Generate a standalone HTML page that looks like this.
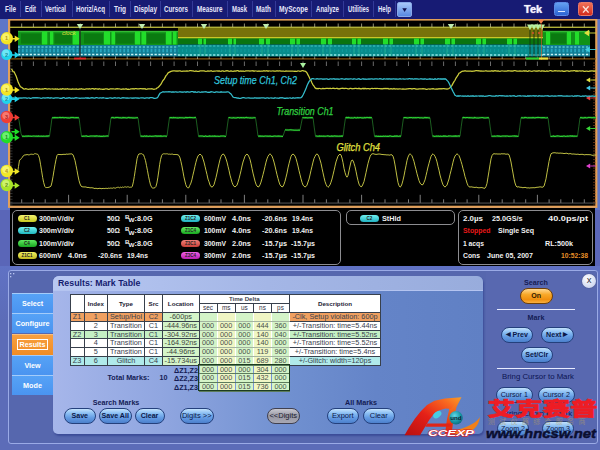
<!DOCTYPE html>
<html><head><meta charset="utf-8"><title>Tek Mark Table</title>
<style>
html,body{margin:0;padding:0}
body{width:600px;height:450px;overflow:hidden;position:relative;background:#5a66b8;font-family:"Liberation Sans",sans-serif;}
.abs{position:absolute}
#menubar{left:0;top:0;width:600px;height:18.5px;background:#171b74;}
#menubar span.m{position:absolute;top:4.5px;font-size:8px;font-weight:bold;color:#dcdcf4;line-height:10px;white-space:nowrap;letter-spacing:-.1px}
#menubar i.s{position:absolute;top:1px;width:1px;height:16px;background:#343a98}
.info{position:absolute;color:#f0f0f0;font-size:7.6px;font-weight:bold;line-height:10px;white-space:nowrap}
.pill{position:absolute;width:19px;height:7px;border-radius:3.5px;font-size:4.5px;line-height:7.5px;text-align:center;color:#222;font-weight:bold}
.box{position:absolute;border:1px solid #8c8c90;border-radius:5px;box-sizing:border-box}
.tab{position:absolute;left:12px;width:41px;height:20px;background:linear-gradient(#56a2f6,#4a94f0);color:#fff;font-weight:bold;font-size:7.2px;line-height:19.5px;text-align:center;border-top:1px solid #a4ccfa;box-sizing:border-box}
.btn{position:absolute;height:16px;border-radius:8px;box-sizing:border-box;border:1px solid #24407c;background:linear-gradient(#c4e2fc 0%,#8cc0f4 30%,#649ce4 62%,#4c80cc 100%);color:#0c1848;font-weight:bold;font-size:7.1px;line-height:14.5px;text-align:center;white-space:nowrap}
.lbl{position:absolute;color:#141c54;font-weight:bold;font-size:7.2px;line-height:10px;white-space:nowrap;text-align:center}
table{border-collapse:collapse;position:absolute;table-layout:fixed}
td{border:1px solid #38404c;padding:0;font-size:7.3px;line-height:7.75px;height:7.75px;text-align:center;color:#3a424e;overflow:hidden;white-space:nowrap}
</style></head>
<body>
<svg class="abs" style="left:0;top:0" width="600" height="210" viewBox="0 0 600 210" font-family="'Liberation Sans',sans-serif">
<rect x="0" y="18" width="600" height="192" fill="#5e76c8"/>
<rect x="9.1" y="19.5" width="587.2" height="187.3" fill="#000" stroke="#e2a058" stroke-width="2.2"/>
<rect x="10" y="26.6" width="586" height="1.4" fill="#b0b038"/>
<path d="M21.7,23.5V27.0M33.4,23.5V27.0M45.2,23.5V27.0M56.9,23.5V27.0M68.6,23.5V27.0M80.3,23.5V27.0M92.0,23.5V27.0M103.8,23.5V27.0M115.5,23.5V27.0M127.2,23.5V27.0M138.9,23.5V27.0M150.6,23.5V27.0M162.4,23.5V27.0M174.1,23.5V27.0M185.8,23.5V27.0M197.5,23.5V27.0M209.2,23.5V27.0M221.0,23.5V27.0M232.7,23.5V27.0M244.4,23.5V27.0M256.1,23.5V27.0M267.8,23.5V27.0M279.6,23.5V27.0M291.3,23.5V27.0M303.0,23.5V27.0M314.7,23.5V27.0M326.4,23.5V27.0M338.2,23.5V27.0M349.9,23.5V27.0M361.6,23.5V27.0M373.3,23.5V27.0M385.0,23.5V27.0M396.8,23.5V27.0M408.5,23.5V27.0M420.2,23.5V27.0M431.9,23.5V27.0M443.6,23.5V27.0M455.4,23.5V27.0M467.1,23.5V27.0M478.8,23.5V27.0M490.5,23.5V27.0M502.2,23.5V27.0M514.0,23.5V27.0M525.7,23.5V27.0M537.4,23.5V27.0M549.1,23.5V27.0M560.8,23.5V27.0M572.6,23.5V27.0M584.3,23.5V27.0" stroke="#c8c8a0" stroke-width="0.9" opacity="0.8" fill="none"/>
<rect x="10" y="58.3" width="586" height="1.2" fill="#8a5a10"/>
<path d="M21.7,55.5V59.0M33.4,55.5V59.0M45.2,55.5V59.0M56.9,55.5V59.0M68.6,55.5V59.0M80.3,55.5V59.0M92.0,55.5V59.0M103.8,55.5V59.0M115.5,55.5V59.0M127.2,55.5V59.0M138.9,55.5V59.0M150.6,55.5V59.0M162.4,55.5V59.0M174.1,55.5V59.0M185.8,55.5V59.0M197.5,55.5V59.0M209.2,55.5V59.0M221.0,55.5V59.0M232.7,55.5V59.0M244.4,55.5V59.0M256.1,55.5V59.0M267.8,55.5V59.0M279.6,55.5V59.0M291.3,55.5V59.0M303.0,55.5V59.0M314.7,55.5V59.0M326.4,55.5V59.0M338.2,55.5V59.0M349.9,55.5V59.0M361.6,55.5V59.0M373.3,55.5V59.0M385.0,55.5V59.0M396.8,55.5V59.0M408.5,55.5V59.0M420.2,55.5V59.0M431.9,55.5V59.0M443.6,55.5V59.0M455.4,55.5V59.0M467.1,55.5V59.0M478.8,55.5V59.0M490.5,55.5V59.0M502.2,55.5V59.0M514.0,55.5V59.0M525.7,55.5V59.0M537.4,55.5V59.0M549.1,55.5V59.0M560.8,55.5V59.0M572.6,55.5V59.0M584.3,55.5V59.0" stroke="#c0c0b0" stroke-width="0.9" opacity="0.75" fill="none"/>
<path d="M21.7,61.5V66.0M33.4,61.5V66.0M45.2,61.5V66.0M56.9,61.5V66.0M68.6,61.5V66.0M80.3,61.5V66.0M92.0,61.5V66.0M103.8,61.5V66.0M115.5,61.5V66.0M127.2,61.5V66.0M138.9,61.5V66.0M150.6,61.5V66.0M162.4,61.5V66.0M174.1,61.5V66.0M185.8,61.5V66.0M197.5,61.5V66.0M209.2,61.5V66.0M221.0,61.5V66.0M232.7,61.5V66.0M244.4,61.5V66.0M256.1,61.5V66.0M267.8,61.5V66.0M279.6,61.5V66.0M291.3,61.5V66.0M303.0,61.5V66.0M314.7,61.5V66.0M326.4,61.5V66.0M338.2,61.5V66.0M349.9,61.5V66.0M361.6,61.5V66.0M373.3,61.5V66.0M385.0,61.5V66.0M396.8,61.5V66.0M408.5,61.5V66.0M420.2,61.5V66.0M431.9,61.5V66.0M443.6,61.5V66.0M455.4,61.5V66.0M467.1,61.5V66.0M478.8,61.5V66.0M490.5,61.5V66.0M502.2,61.5V66.0M514.0,61.5V66.0M525.7,61.5V66.0M537.4,61.5V66.0M549.1,61.5V66.0M560.8,61.5V66.0M572.6,61.5V66.0M584.3,61.5V66.0" stroke="#a0a0a0" stroke-width="0.9" opacity="0.75" fill="none"/>
<path d="M21.7,199.3V203.0M33.4,199.3V203.0M45.2,199.3V203.0M56.9,199.3V203.0M68.6,194.8V203.0M80.3,199.3V203.0M92.0,199.3V203.0M103.8,199.3V203.0M115.5,199.3V203.0M127.2,194.8V203.0M138.9,199.3V203.0M150.6,199.3V203.0M162.4,199.3V203.0M174.1,199.3V203.0M185.8,194.8V203.0M197.5,199.3V203.0M209.2,199.3V203.0M221.0,199.3V203.0M232.7,199.3V203.0M244.4,194.8V203.0M256.1,199.3V203.0M267.8,199.3V203.0M279.6,199.3V203.0M291.3,199.3V203.0M303.0,194.8V203.0M314.7,199.3V203.0M326.4,199.3V203.0M338.2,199.3V203.0M349.9,199.3V203.0M361.6,194.8V203.0M373.3,199.3V203.0M385.0,199.3V203.0M396.8,199.3V203.0M408.5,199.3V203.0M420.2,194.8V203.0M431.9,199.3V203.0M443.6,199.3V203.0M455.4,199.3V203.0M467.1,199.3V203.0M478.8,194.8V203.0M490.5,199.3V203.0M502.2,199.3V203.0M514.0,199.3V203.0M525.7,199.3V203.0M537.4,194.8V203.0M549.1,199.3V203.0M560.8,199.3V203.0M572.6,199.3V203.0M584.3,199.3V203.0" stroke="#b0b0b0" stroke-width="0.9" opacity="0.8" fill="none"/>
<rect x="10" y="202.6" width="586" height=".9" fill="#606060"/>
<path d="M10.0,63.0H12.5M10.0,65.8H12.5M10.0,68.7H12.5M10.0,71.5H12.5M10.0,74.4H12.5M10.0,77.2H12.5M10.0,80.0H12.5M10.0,82.9H12.5M10.0,85.7H12.5M10.0,88.6H12.5M10.0,91.4H12.5M10.0,94.2H12.5M10.0,97.1H12.5M10.0,99.9H12.5M10.0,102.8H12.5M10.0,105.6H12.5M10.0,108.4H12.5M10.0,111.3H12.5M10.0,114.1H12.5M10.0,117.0H12.5M10.0,119.8H12.5M10.0,122.6H12.5M10.0,125.5H12.5M10.0,128.3H12.5M10.0,131.2H12.5M10.0,134.0H12.5M10.0,136.8H12.5M10.0,139.7H12.5M10.0,142.5H12.5M10.0,145.4H12.5M10.0,148.2H12.5M10.0,151.0H12.5M10.0,153.9H12.5M10.0,156.7H12.5M10.0,159.6H12.5M10.0,162.4H12.5M10.0,165.2H12.5M10.0,168.1H12.5M10.0,170.9H12.5M10.0,173.8H12.5M10.0,176.6H12.5M10.0,179.4H12.5M10.0,182.3H12.5M10.0,185.1H12.5M10.0,188.0H12.5M10.0,190.8H12.5M10.0,193.6H12.5M10.0,196.5H12.5M10.0,199.3H12.5M10.0,202.2H12.5M10.0,205.0H12.5" stroke="#666" stroke-width="0.5" fill="none"/>
<path d="M593.0,63.0H596.0M593.0,65.8H596.0M593.0,68.7H596.0M593.0,71.5H596.0M593.0,74.4H596.0M593.0,77.2H596.0M593.0,80.0H596.0M593.0,82.9H596.0M593.0,85.7H596.0M593.0,88.6H596.0M593.0,91.4H596.0M593.0,94.2H596.0M593.0,97.1H596.0M593.0,99.9H596.0M593.0,102.8H596.0M593.0,105.6H596.0M593.0,108.4H596.0M593.0,111.3H596.0M593.0,114.1H596.0M593.0,117.0H596.0M593.0,119.8H596.0M593.0,122.6H596.0M593.0,125.5H596.0M593.0,128.3H596.0M593.0,131.2H596.0M593.0,134.0H596.0M593.0,136.8H596.0M593.0,139.7H596.0M593.0,142.5H596.0M593.0,145.4H596.0M593.0,148.2H596.0M593.0,151.0H596.0M593.0,153.9H596.0M593.0,156.7H596.0M593.0,159.6H596.0M593.0,162.4H596.0M593.0,165.2H596.0M593.0,168.1H596.0M593.0,170.9H596.0M593.0,173.8H596.0M593.0,176.6H596.0M593.0,179.4H596.0M593.0,182.3H596.0M593.0,185.1H596.0M593.0,188.0H596.0M593.0,190.8H596.0M593.0,193.6H596.0M593.0,196.5H596.0M593.0,199.3H596.0M593.0,202.2H596.0M593.0,205.0H596.0" stroke="#a05020" stroke-width="0.6" fill="none"/>
<rect x="18" y="31" width="160" height="14" fill="#109218"/>
<rect x="178" y="38" width="365" height="6.5" fill="#0a7410"/>
<rect x="543" y="31" width="47" height="14" fill="#109218"/>
<rect x="178" y="28" width="365" height="9.5" fill="#77720a"/>
<rect x="178" y="37" width="365" height="1.2999999999999972" fill="#c8c828"/>
<rect x="18" y="30.8" width="160" height="1.4000000000000021" fill="#34b834"/>
<rect x="543" y="30.8" width="47" height="1.4000000000000021" fill="#34b834"/>
<rect x="21" y="33.5" width="20" height="10.100000000000001" fill="#0a7a10"/>
<rect x="54.5" y="33.5" width="17.5" height="10.100000000000001" fill="#0a7a10"/>
<rect x="84" y="33.5" width="19" height="10.100000000000001" fill="#0a7a10"/>
<rect x="116" y="33.5" width="18" height="10.100000000000001" fill="#0a7a10"/>
<rect x="147" y="33.5" width="18" height="10.100000000000001" fill="#0a7a10"/>
<rect x="551" y="33.5" width="15" height="10.100000000000001" fill="#0a7a10"/>
<rect x="42" y="31.5" width="5.299999999999997" height="13.0" fill="#22dd2a"/>
<rect x="50" y="31.5" width="3.299999999999997" height="13.0" fill="#22dd2a"/>
<rect x="72.7" y="31.5" width="6.599999999999994" height="13.0" fill="#22dd2a"/>
<rect x="104" y="31.5" width="6" height="13.0" fill="#22dd2a"/>
<rect x="111.5" y="31.5" width="3.5" height="13.0" fill="#22dd2a"/>
<rect x="135" y="31.5" width="5" height="13.0" fill="#22dd2a"/>
<rect x="141.5" y="31.5" width="4.5" height="13.0" fill="#22dd2a"/>
<rect x="166" y="31.5" width="5.5" height="13.0" fill="#22dd2a"/>
<rect x="173" y="31.5" width="3.5" height="13.0" fill="#22dd2a"/>
<rect x="198" y="38.5" width="4" height="6.0" fill="#22dd2a"/>
<rect x="203.5" y="38.5" width="2.5" height="6.0" fill="#22dd2a"/>
<rect x="228" y="38.5" width="4" height="6.0" fill="#22dd2a"/>
<rect x="233.5" y="38.5" width="2.5" height="6.0" fill="#22dd2a"/>
<rect x="259" y="38.5" width="5" height="6.0" fill="#22dd2a"/>
<rect x="266" y="38.5" width="4" height="6.0" fill="#22dd2a"/>
<rect x="290" y="38.5" width="5" height="6.0" fill="#22dd2a"/>
<rect x="296.5" y="38.5" width="3.5" height="6.0" fill="#22dd2a"/>
<rect x="321" y="38.5" width="5" height="6.0" fill="#22dd2a"/>
<rect x="328" y="38.5" width="4" height="6.0" fill="#22dd2a"/>
<rect x="352" y="38.5" width="4" height="6.0" fill="#22dd2a"/>
<rect x="357.5" y="38.5" width="3.5" height="6.0" fill="#22dd2a"/>
<rect x="383" y="38.5" width="5" height="6.0" fill="#22dd2a"/>
<rect x="389.5" y="38.5" width="3.5" height="6.0" fill="#22dd2a"/>
<rect x="414" y="38.5" width="5" height="6.0" fill="#22dd2a"/>
<rect x="420.5" y="38.5" width="3.5" height="6.0" fill="#22dd2a"/>
<rect x="445" y="38.5" width="5" height="6.0" fill="#22dd2a"/>
<rect x="451.5" y="38.5" width="3.5" height="6.0" fill="#22dd2a"/>
<rect x="476" y="38.5" width="5" height="6.0" fill="#22dd2a"/>
<rect x="482.5" y="38.5" width="3.5" height="6.0" fill="#22dd2a"/>
<rect x="507" y="38.5" width="5" height="6.0" fill="#22dd2a"/>
<rect x="513.5" y="38.5" width="3.5" height="6.0" fill="#22dd2a"/>
<rect x="546" y="32" width="4" height="12.5" fill="#22dd2a"/>
<rect x="567" y="32" width="4" height="12.5" fill="#22dd2a"/>
<rect x="575" y="32" width="4" height="12.5" fill="#22dd2a"/>
<rect x="18" y="45" width="160" height="11.5" fill="#107c94"/>
<rect x="178" y="44.5" width="365" height="12.0" fill="#078c8c"/>
<rect x="543" y="45" width="47" height="11.5" fill="#107c94"/>
<path d="M18,47H178M543,47H590" stroke="#58c8d0" stroke-width="1.6" stroke-dasharray="2.2,1.7" fill="none"/>
<path d="M18,50.5H178M543,50.5H590" stroke="#28a8c0" stroke-width="3.4" stroke-dasharray="1.8,2.1" fill="none"/>
<path d="M18,54.5H178M543,54.5H590" stroke="#c8f4f4" stroke-width="1.5" stroke-dasharray="2.3,1.6" fill="none"/>
<path d="M178,46H543" stroke="#48c8c8" stroke-width="1" stroke-dasharray="2.3,1.6" fill="none"/>
<path d="M178,50.5H543" stroke="#10a0a0" stroke-width="3" stroke-dasharray="1.2,2.7" fill="none" opacity=".7"/>
<path d="M178,55H543" stroke="#90e8e8" stroke-width="1.3" stroke-dasharray="2.3,1.6" fill="none"/>
<path d="M200.0,44V56M205.0,44V56M230.0,44V56M235.0,44V56M262.0,44V56M268.0,44V56M292.0,44V56M298.0,44V56M323.0,44V56M330.0,44V56M354.0,44V56M359.0,44V56M385.0,44V56M391.0,44V56M416.0,44V56M422.0,44V56M447.0,44V56M453.0,44V56M478.0,44V56M484.0,44V56M509.0,44V56M515.0,44V56" stroke="#48e098" stroke-width=".6" opacity=".6" fill="none"/>
<path d="M76.8,24.0h6.4l-3.2,5.0z" fill="#c0ecb0"/>
<path d="M138.8,24.0h6.4l-3.2,5.0z" fill="#c0ecb0"/>
<path d="M200.8,24.0h6.4l-3.2,5.0z" fill="#c0ecb0"/>
<path d="M262.8,24.0h6.4l-3.2,5.0z" fill="#c0ecb0"/>
<path d="M447.8,24.0h6.4l-3.2,5.0z" fill="#c0ecb0"/>
<path d="M527.0,24.5h6.0l-3.0,5.5z" fill="#b8f0a0"/>
<path d="M531.0,24.5h6.0l-3.0,5.5z" fill="#b8f0a0"/>
<path d="M535.0,24.5h6.0l-3.0,5.5z" fill="#b8f0a0"/>
<path d="M539.0,24.5h6.0l-3.0,5.5z" fill="#b8f0a0"/>
<path d="M537.8,19.5h6.4l-3.2,4.5z" fill="#f08048"/>
<path d="M300.0,63.0h6.0l-3.0,5.0z" fill="#a8f0a0"/>
<path d="M80,29V58" stroke="#202020" stroke-width="1.2"/>
<path d="M530,30V58M534,30V58M538,30V58" stroke="#103010" stroke-width="1" opacity=".85"/>
<path d="M541.5,24V60" stroke="#d06030" stroke-width=".8" opacity=".8"/>
<rect x="74" y="57.6" width="12" height="1.8" fill="#e02828"/>
<rect x="526" y="57.4" width="13" height="2.2" fill="#30d030"/><rect x="539" y="57.4" width="9" height="2.2" fill="#e8e040"/>
<circle cx="539" cy="33" r="1" fill="#e05030"/><circle cx="533" cy="33" r=".9" fill="#e05030"/>
<path d="M584.0,33.0l5.1,-3.2v6.4z" fill="#e0e040"/><path d="M589.1,33.0H596" stroke="#e0e040" stroke-width=".9"/>
<path d="M585.0,49.5l4.8,-3.0v6.0z" fill="#40d0e0"/><path d="M589.8,49.5H596" stroke="#40d0e0" stroke-width=".9"/>
<path d="M586.0,80.0l4.2,-2.6v5.2z" fill="#e0e040"/><path d="M590.2,80.0H596" stroke="#e0e040" stroke-width=".9"/>
<path d="M586.0,88.0l4.2,-2.6v5.2z" fill="#40c8e8"/><path d="M590.2,88.0H596" stroke="#40c8e8" stroke-width=".9"/>
<path d="M586.0,98.0l4.2,-2.6v5.2z" fill="#e84040"/><path d="M590.2,98.0H596" stroke="#e84040" stroke-width=".9"/>
<path d="M586.0,128.5l4.2,-2.6v5.2z" fill="#38d838"/><path d="M590.2,128.5H596" stroke="#38d838" stroke-width=".9"/>
<path d="M586.0,166.0l4.2,-2.6v5.2z" fill="#e040d0"/><path d="M590.2,166.0H596" stroke="#e040d0" stroke-width=".9"/>

<path d="M11.5,68.9 L12.2,70.0 L13.0,71.6 L14.1,71.8 L15.1,73.9 L16.2,76.3 L17.2,79.2 L18.3,82.6 L19.4,84.8 L20.4,86.8 L21.5,87.2 L22.5,88.0 L23.5,88.9 L24.5,89.2 L25.5,88.7 L26.5,88.8 L27.5,89.1 L28.5,89.3 L29.5,89.1 L30.5,88.9 L31.5,89.3 L32.5,88.7 L33.5,89.3 L34.5,88.9 L35.5,88.8 L36.5,88.7 L37.4,88.9 L38.4,89.2 L39.4,88.8 L40.4,89.1 L41.4,89.1 L42.4,88.9 L43.4,89.0 L44.4,88.7 L45.4,88.7 L46.4,88.8 L47.4,89.1 L48.4,88.9 L49.4,88.9 L50.4,89.1 L51.4,89.0 L52.4,88.9 L53.4,89.2 L54.4,89.1 L55.4,88.8 L56.4,89.1 L57.4,89.0 L58.4,89.3 L59.4,89.2 L60.4,88.9 L61.4,89.3 L62.4,88.7 L63.3,88.9 L64.3,89.2 L65.3,88.8 L66.3,89.0 L67.3,88.7 L68.3,89.1 L69.3,89.2 L70.3,89.1 L71.3,89.3 L72.3,88.9 L73.3,89.1 L74.3,89.1 L75.3,89.1 L76.3,89.0 L77.3,89.2 L78.3,89.3 L79.3,89.0 L80.3,89.1 L81.3,88.7 L82.3,89.1 L83.3,89.1 L84.3,89.3 L85.3,89.2 L86.3,88.8 L87.3,88.9 L88.3,89.1 L89.2,88.7 L90.2,89.0 L91.2,88.8 L92.2,88.7 L93.2,88.7 L94.2,89.2 L95.2,88.7 L96.2,88.8 L97.2,88.9 L98.2,89.3 L99.2,88.7 L100.2,89.0 L101.2,89.0 L102.2,89.3 L103.2,89.2 L104.2,89.3 L105.2,88.8 L106.2,88.9 L107.2,88.9 L108.2,89.3 L109.2,89.3 L110.2,88.8 L111.2,88.8 L112.2,88.8 L113.2,88.8 L114.2,89.0 L115.2,89.1 L116.1,88.8 L117.1,88.7 L118.1,88.9 L119.1,88.9 L120.1,89.0 L121.1,89.3 L122.1,89.1 L123.1,89.0 L124.1,89.1 L125.1,89.1 L126.1,88.7 L127.1,89.3 L128.1,89.2 L129.1,89.3 L130.1,89.2 L131.1,88.9 L132.1,88.9 L133.1,88.7 L134.1,89.1 L135.1,88.7 L136.1,88.7 L137.1,88.8 L138.1,88.8 L139.1,88.9 L140.1,88.7 L141.1,88.7 L142.0,88.8 L143.0,88.7 L144.0,88.9 L145.0,88.7 L146.0,89.3 L147.0,89.1 L148.0,88.8 L149.0,88.8 L150.0,88.9 L151.0,88.9 L152.0,88.7 L153.0,89.2 L154.0,89.3 L155.0,89.0 L156.0,88.8 L157.0,88.1 L158.0,87.4 L159.0,86.5 L160.0,85.3 L161.0,84.2 L162.0,82.2 L163.0,80.5 L164.0,79.5 L165.0,77.6 L166.0,75.7 L167.0,74.6 L168.0,73.0 L169.0,72.4 L170.0,71.9 L171.0,71.4 L172.0,71.1 L173.0,70.8 L174.0,70.9 L175.0,70.8 L176.0,71.2 L177.0,71.0 L178.0,71.2 L179.0,70.9 L180.0,70.8 L181.0,71.2 L182.0,71.3 L183.0,71.2 L184.0,71.2 L185.0,71.2 L186.0,71.2 L187.0,70.8 L188.0,71.0 L189.0,70.9 L190.0,70.7 L191.0,70.7 L192.0,70.8 L193.0,70.8 L194.0,71.1 L195.0,71.3 L196.0,71.0 L197.0,71.3 L198.0,71.3 L199.0,71.3 L200.0,70.9 L201.0,70.8 L202.0,70.8 L203.0,70.8 L204.0,70.8 L205.0,71.1 L206.0,71.3 L207.0,71.2 L208.0,71.0 L209.0,71.1 L210.0,71.2 L211.0,70.7 L212.0,71.1 L213.0,71.3 L214.0,71.2 L215.0,71.2 L216.0,71.0 L217.0,70.8 L218.0,71.2 L219.0,70.9 L220.0,71.2 L221.0,71.3 L222.0,70.9 L223.0,70.9 L224.0,71.3 L225.0,71.2 L226.0,70.8 L227.0,70.7 L228.0,70.8 L229.0,71.3 L230.0,71.2 L231.0,70.8 L232.0,71.2 L233.0,71.3 L234.0,71.1 L235.0,70.9 L236.0,71.0 L237.0,70.7 L238.0,70.7 L239.0,71.3 L240.0,71.1 L241.0,71.0 L242.0,71.3 L243.0,71.0 L244.0,71.3 L245.0,71.2 L246.0,70.8 L247.0,70.8 L248.0,70.9 L249.0,70.8 L250.0,71.1 L251.0,70.8 L252.0,70.9 L253.0,70.7 L254.0,71.3 L255.0,70.9 L256.0,71.0 L257.0,71.1 L258.0,71.3 L259.0,70.9 L260.0,71.3 L261.0,71.0 L262.0,71.0 L263.0,71.0 L264.0,70.7 L265.0,71.0 L266.0,70.8 L267.0,70.7 L268.0,71.2 L269.0,70.8 L270.0,71.0 L271.0,71.2 L272.0,71.0 L273.0,70.9 L274.0,71.0 L275.0,71.0 L276.0,71.2 L277.0,70.7 L278.0,71.0 L279.0,70.8 L280.0,70.8 L281.0,71.2 L282.0,71.0 L283.0,71.0 L284.0,71.2 L285.0,71.3 L286.0,71.0 L287.0,71.1 L288.0,71.0 L289.0,71.0 L290.0,71.1 L291.0,71.0 L292.0,71.0 L293.0,71.0 L294.0,71.3 L295.0,71.1 L296.0,71.3 L297.0,71.3 L298.0,70.8 L299.0,71.0 L300.0,71.3 L301.0,71.2 L302.0,70.7 L303.0,70.7 L304.0,71.0 L305.0,71.0 L306.0,71.8 L307.0,72.9 L308.0,74.9 L309.0,76.8 L310.0,79.0 L311.0,80.6 L312.0,83.0 L313.0,84.8 L314.0,86.0 L315.0,87.8 L316.0,88.6 L317.0,88.3 L318.0,88.8 L319.0,88.4 L320.0,88.5 L321.0,88.8 L322.0,88.7 L323.0,88.3 L324.0,88.5 L325.0,88.5 L326.0,88.4 L327.0,88.3 L328.0,88.4 L329.0,88.7 L330.0,88.2 L331.0,88.6 L332.0,88.5 L333.0,88.2 L334.0,88.4 L335.0,88.6 L336.0,88.5 L337.0,88.2 L338.0,88.9 L339.0,88.7 L340.0,88.9 L341.0,88.3 L342.0,88.4 L343.0,88.2 L344.0,88.7 L345.0,88.4 L346.0,88.3 L347.0,88.5 L348.0,88.9 L349.0,88.8 L350.0,88.4 L351.0,88.3 L352.0,88.9 L353.0,88.6 L354.0,88.7 L355.0,88.3 L356.0,88.3 L357.0,88.7 L358.0,88.6 L359.0,88.3 L360.0,88.9 L361.0,88.7 L362.0,88.8 L363.0,88.3 L364.0,88.9 L365.0,88.3 L366.0,88.9 L367.0,88.6 L368.0,88.6 L369.0,88.7 L370.0,89.0 L371.0,88.5 L372.0,88.4 L373.0,88.7 L374.0,88.5 L375.0,88.4 L376.0,88.5 L377.0,88.4 L378.0,88.5 L379.0,88.6 L380.0,88.6 L381.0,88.9 L382.0,88.6 L383.0,88.8 L384.0,88.5 L385.0,88.7 L386.0,88.4 L387.0,88.6 L388.0,88.4 L389.0,89.0 L390.0,88.8 L391.0,88.6 L392.0,88.8 L393.0,89.1 L394.0,88.5 L395.0,89.1 L396.0,88.8 L397.0,88.8 L398.0,89.1 L399.0,88.8 L400.0,88.9 L401.0,89.0 L402.0,89.2 L403.0,88.8 L404.0,89.1 L405.0,89.0 L406.0,89.0 L407.0,88.8 L408.0,88.8 L409.0,88.6 L410.0,88.6 L411.0,88.6 L412.0,89.1 L413.0,88.7 L414.0,88.7 L415.0,88.6 L416.0,89.2 L417.0,89.2 L418.0,89.1 L419.0,88.8 L420.0,88.8 L421.0,88.8 L422.0,88.9 L423.0,88.7 L424.0,88.9 L425.0,88.8 L426.0,89.3 L427.0,89.3 L428.0,89.0 L429.0,88.8 L430.0,89.3 L431.0,88.8 L432.0,88.9 L433.0,88.6 L434.0,88.9 L435.0,89.0 L436.0,89.0 L437.0,88.8 L438.0,89.0 L439.0,88.6 L440.0,88.8 L441.0,88.7 L442.0,88.9 L443.0,88.7 L444.0,88.7 L445.0,88.9 L446.0,88.8 L447.0,89.1 L448.0,88.8 L449.0,88.5 L450.0,87.6 L451.0,86.5 L452.0,85.3 L453.0,83.4 L454.0,81.6 L455.0,80.3 L456.0,78.0 L457.0,76.7 L458.0,75.1 L459.0,73.3 L460.0,72.8 L461.0,72.0 L462.0,71.3 L463.0,71.2 L464.0,71.2 L465.0,70.7 L466.0,71.0 L467.0,71.0 L468.0,71.2 L469.0,71.2 L470.0,71.2 L471.0,71.1 L472.0,71.3 L473.0,71.1 L474.0,71.1 L475.0,70.8 L476.0,70.7 L477.0,70.7 L478.0,70.9 L479.0,70.7 L480.0,71.2 L481.0,71.0 L482.0,71.1 L483.0,71.1 L484.0,71.1 L485.0,71.0 L486.0,70.7 L487.0,71.2 L488.0,71.2 L489.0,71.0 L490.0,71.0 L491.0,71.1 L492.0,70.7 L493.0,71.2 L494.0,70.8 L495.0,70.7 L496.0,70.8 L497.0,71.2 L498.0,70.8 L499.0,71.2 L500.0,71.3 L501.0,71.0 L502.0,70.9 L503.0,71.0 L504.0,71.1 L505.0,71.2 L506.0,71.1 L507.0,71.1 L508.0,70.7 L509.0,70.8 L510.0,70.8 L511.0,71.2 L512.0,70.9 L513.0,71.0 L514.0,70.7 L515.0,70.7 L516.0,70.8 L517.0,71.1 L518.0,71.1 L519.0,71.1 L520.0,70.9 L521.0,71.0 L522.0,71.0 L523.0,71.0 L524.0,70.7 L525.0,71.3 L526.0,70.8 L527.0,71.3 L528.0,71.3 L529.0,70.7 L530.0,71.0 L531.0,71.2 L532.0,71.3 L533.0,71.0 L534.0,70.8 L535.0,70.8 L536.0,71.3 L537.0,70.8 L538.0,71.1 L539.0,70.7 L540.0,71.0 L541.0,71.3 L542.0,70.7 L543.0,71.2 L544.0,71.0 L545.0,71.3 L546.0,71.1 L547.0,70.8 L548.0,71.3 L549.0,71.0 L550.0,70.7 L551.0,70.7 L552.0,71.0 L553.0,71.0 L554.0,70.9 L555.0,70.7 L556.0,70.9 L557.0,70.9 L558.0,71.2 L559.0,70.7 L560.0,71.2 L561.0,71.2 L562.0,70.7 L563.0,71.3 L564.0,71.1 L565.0,71.3 L566.0,70.9 L567.0,70.9 L568.0,70.9 L569.0,71.3 L570.0,71.1 L571.0,70.9 L572.0,70.9 L573.0,70.8 L574.0,70.7 L575.0,70.7 L576.0,71.2 L577.0,70.8 L578.0,71.3 L579.0,70.8 L580.0,70.8 L581.0,71.0 L582.0,70.8 L583.0,70.9 L584.0,71.3 L585.0,71.3 L586.0,71.2 L587.0,71.1 L588.0,71.3 L589.0,71.3 L590.0,71.0 L591.0,71.2 L592.0,70.7 L593.0,71.2 L594.0,71.0 L595.0,71.2 L596.0,71.1" fill="none" stroke="#d8d840" stroke-width="1.25" opacity=".95"/>
<path d="M10.0,97.9 L11.0,97.7 L12.0,98.3 L13.0,97.7 L14.0,98.0 L15.0,97.9 L16.0,97.9 L17.0,98.2 L18.0,98.3 L19.0,97.8 L20.0,98.1 L21.0,97.9 L22.0,98.0 L23.0,97.9 L24.0,97.8 L25.0,97.8 L26.0,97.8 L27.0,98.3 L28.0,98.0 L29.0,97.8 L30.0,98.3 L31.0,98.3 L32.0,98.0 L33.0,97.7 L34.0,97.8 L35.0,97.7 L36.0,97.9 L37.0,97.7 L38.0,97.8 L39.0,97.8 L40.0,98.0 L41.0,98.3 L42.0,98.2 L43.0,97.9 L44.0,97.9 L45.0,98.0 L46.0,97.9 L47.0,97.9 L48.0,97.7 L49.0,97.8 L50.0,98.3 L51.0,97.7 L52.0,98.0 L53.0,98.1 L54.0,98.3 L55.0,97.8 L56.0,97.8 L57.0,97.8 L58.0,97.9 L59.0,98.0 L60.0,98.3 L61.0,98.2 L62.0,98.3 L63.0,97.7 L64.0,97.7 L65.0,98.1 L66.0,98.3 L67.0,98.0 L68.0,98.1 L69.0,97.7 L70.0,97.9 L71.0,98.3 L72.0,98.2 L73.0,98.2 L74.0,98.3 L75.0,97.8 L76.0,97.7 L77.0,97.8 L78.0,98.0 L79.0,98.1 L80.0,98.3 L81.0,98.2 L82.0,98.1 L83.0,98.2 L84.0,98.0 L85.0,98.0 L86.0,97.7 L87.0,98.2 L88.0,97.8 L89.0,98.3 L90.0,98.1 L91.0,97.9 L92.0,97.7 L93.0,97.8 L94.0,98.1 L95.0,98.1 L96.0,97.7 L97.0,97.7 L98.0,98.0 L99.0,98.1 L100.0,97.9 L101.0,97.8 L102.0,98.1 L103.0,97.7 L104.0,97.9 L105.0,98.0 L106.0,98.3 L107.0,98.1 L108.0,98.3 L109.0,98.0 L110.0,97.8 L111.0,97.8 L112.0,98.3 L113.0,98.1 L114.0,97.9 L115.0,97.7 L116.0,98.0 L117.0,98.1 L118.0,97.9 L119.0,97.8 L120.0,98.1 L121.0,98.3 L122.0,97.8 L123.0,97.7 L124.0,97.9 L125.0,97.9 L126.0,98.1 L127.0,97.8 L128.0,98.2 L129.0,98.2 L130.0,98.0 L131.0,97.8 L132.0,98.3 L133.0,97.9 L134.0,98.2 L135.0,97.8 L136.0,97.8 L137.0,98.2 L138.0,97.9 L139.0,98.3 L140.0,98.0 L141.0,97.8 L142.0,97.8 L143.0,97.9 L144.0,98.1 L145.0,98.3 L146.0,97.8 L147.0,97.9 L148.0,97.8 L149.0,98.3 L150.0,97.7 L151.0,97.7 L152.0,97.7 L153.0,97.9 L154.0,98.3 L155.0,98.3 L156.0,98.2 L157.0,97.9 L158.0,96.8 L159.0,94.9 L160.0,93.3 L161.0,92.7 L162.0,92.2 L163.0,91.7 L164.0,92.1 L165.0,91.9 L166.0,91.9 L167.0,91.9 L168.0,91.8 L169.0,91.7 L170.0,91.8 L171.0,91.9 L172.0,92.3 L173.0,91.7 L174.0,92.3 L175.0,91.8 L176.0,91.9 L177.0,92.2 L178.0,92.2 L179.0,92.0 L180.0,91.7 L181.0,92.0 L182.0,91.9 L183.0,92.3 L184.0,91.8 L185.0,91.9 L186.0,92.3 L187.0,91.7 L188.0,91.9 L189.0,92.2 L190.0,92.2 L191.0,91.7 L192.0,91.7 L193.0,91.7 L194.0,92.3 L195.0,91.8 L196.0,92.2 L197.0,92.3 L198.0,91.9 L199.0,91.8 L200.0,92.3 L201.0,92.1 L202.0,91.8 L203.0,92.2 L204.0,91.9 L205.0,91.8 L206.0,91.7 L207.0,92.2 L208.0,92.3 L209.0,92.1 L210.0,92.3 L211.0,91.7 L212.0,91.8 L213.0,92.0 L214.0,92.3 L215.0,92.3 L216.0,91.9 L217.0,91.8 L218.0,92.0 L219.0,92.0 L220.0,92.3 L221.0,91.8 L222.0,92.2 L223.0,92.2 L224.0,92.2 L225.0,92.2 L226.0,92.1 L227.0,91.9 L228.0,91.9 L229.0,92.2 L230.0,93.3 L231.0,94.0 L232.0,95.5 L233.0,97.0 L234.0,97.5 L235.0,97.7 L236.0,97.7 L237.0,98.0 L238.0,97.9 L239.0,98.3 L240.0,98.3 L241.0,98.3 L242.0,97.8 L243.0,97.7 L244.0,97.7 L245.0,98.0 L246.0,98.1 L247.0,98.0 L248.0,97.8 L249.0,97.9 L250.0,98.1 L251.0,98.1 L252.0,98.2 L253.0,98.2 L254.0,98.1 L255.0,97.7 L256.0,98.2 L257.0,97.9 L258.0,98.0 L259.0,97.9 L260.0,98.2 L261.0,97.8 L262.0,97.8 L263.0,97.8 L264.0,97.8 L265.0,98.3 L266.0,98.1 L267.0,97.9 L268.0,97.9 L269.0,98.3 L270.0,98.0 L271.0,97.8 L272.0,98.2 L273.0,98.1 L274.0,98.3 L275.0,97.7 L276.0,98.0 L277.0,98.2 L278.0,98.2 L279.0,98.3 L280.0,97.7 L281.0,97.9 L282.0,97.7 L283.0,97.8 L284.0,98.3 L285.0,98.1 L286.0,98.3 L287.0,97.9 L288.0,98.3 L289.0,98.0 L290.0,97.8 L291.0,98.2 L292.0,98.3 L293.0,97.7 L294.0,98.1 L295.0,98.1 L296.0,97.8 L297.0,97.9 L298.0,97.7 L299.0,97.8 L300.0,97.8 L301.0,97.7 L302.0,96.8 L303.0,95.0 L304.0,92.9 L305.0,90.8 L306.0,88.6 L307.0,85.8 L308.0,83.6 L309.0,81.6 L310.0,80.5 L311.0,79.4 L312.0,78.7 L313.0,78.7 L314.0,78.9 L315.0,79.0 L316.0,79.1 L317.0,78.7 L318.0,78.8 L319.0,79.1 L320.0,78.9 L321.0,78.8 L322.0,78.9 L323.0,79.3 L324.0,78.9 L325.0,79.0 L326.0,78.9 L327.0,78.9 L328.0,79.3 L329.0,79.3 L330.0,78.9 L331.0,78.8 L332.0,79.2 L333.0,78.8 L334.0,78.7 L335.0,79.3 L336.0,78.9 L337.0,79.2 L338.0,78.9 L339.0,79.3 L340.0,79.0 L341.0,78.8 L342.0,78.7 L343.0,79.0 L344.0,79.1 L345.0,79.3 L346.0,78.7 L347.0,79.1 L348.0,78.9 L349.0,79.0 L350.0,78.8 L351.0,78.8 L352.0,79.0 L353.0,79.3 L354.0,78.7 L355.0,79.0 L356.0,79.2 L357.0,79.3 L358.0,78.8 L359.0,78.7 L360.0,79.3 L361.0,79.3 L362.0,79.0 L363.0,78.7 L364.0,79.3 L365.0,78.9 L366.0,79.3 L367.0,79.1 L368.0,79.2 L369.0,78.8 L370.0,79.2 L371.0,78.8 L372.0,78.9 L373.0,79.2 L374.0,79.2 L375.0,78.8 L376.0,78.8 L377.0,78.9 L378.0,79.0 L379.0,78.9 L380.0,78.7 L381.0,78.8 L382.0,79.2 L383.0,79.3 L384.0,78.7 L385.0,79.0 L386.0,79.2 L387.0,78.7 L388.0,79.2 L389.0,78.7 L390.0,79.1 L391.0,79.0 L392.0,79.1 L393.0,78.9 L394.0,78.9 L395.0,79.1 L396.0,78.9 L397.0,79.1 L398.0,79.0 L399.0,79.0 L400.0,78.7 L401.0,79.1 L402.0,79.0 L403.0,78.8 L404.0,79.2 L405.0,79.2 L406.0,79.0 L407.0,78.8 L408.0,79.0 L409.0,78.7 L410.0,78.7 L411.0,79.0 L412.0,78.7 L413.0,79.0 L414.0,79.0 L415.0,78.7 L416.0,79.1 L417.0,78.7 L418.0,79.2 L419.0,79.2 L420.0,79.0 L421.0,78.7 L422.0,79.0 L423.0,78.9 L424.0,79.3 L425.0,78.7 L426.0,79.2 L427.0,79.3 L428.0,79.2 L429.0,79.2 L430.0,78.8 L431.0,79.3 L432.0,79.0 L433.0,79.3 L434.0,79.3 L435.0,78.8 L436.0,79.2 L437.0,79.3 L438.0,78.7 L439.0,78.9 L440.0,79.2 L441.0,78.8 L442.0,79.3 L443.0,78.8 L444.0,79.2 L445.0,78.8 L446.0,79.3 L447.0,80.4 L448.0,81.3 L449.0,83.1 L450.0,85.3 L451.0,87.4 L452.0,89.4 L453.0,91.5 L454.0,93.3 L455.0,95.2 L456.0,95.8 L457.0,96.3 L458.0,95.8 L459.0,96.2 L460.0,95.7 L461.0,96.0 L462.0,96.1 L463.0,95.9 L464.0,96.3 L465.0,96.0 L466.0,96.1 L467.0,96.3 L468.0,95.7 L469.0,96.3 L470.0,96.1 L471.0,95.9 L472.0,96.2 L473.0,95.8 L474.0,96.3 L475.0,96.1 L476.0,95.9 L477.0,96.2 L478.0,96.0 L479.0,95.8 L480.0,96.2 L481.0,95.7 L482.0,96.2 L483.0,95.8 L484.0,96.1 L485.0,96.3 L486.0,96.1 L487.0,96.1 L488.0,95.9 L489.0,95.7 L490.0,95.7 L491.0,95.8 L492.0,96.1 L493.0,96.0 L494.0,96.0 L495.0,96.3 L496.0,95.7 L497.0,95.8 L498.0,96.1 L499.0,95.7 L500.0,95.7 L501.0,95.9 L502.0,95.7 L503.0,95.9 L504.0,95.8 L505.0,96.1 L506.0,96.1 L507.0,95.8 L508.0,96.1 L509.0,96.0 L510.0,95.7 L511.0,96.3 L512.0,95.8 L513.0,95.8 L514.0,95.7 L515.0,96.1 L516.0,96.3 L517.0,96.2 L518.0,95.9 L519.0,95.8 L520.0,95.7 L521.0,96.1 L522.0,96.0 L523.0,95.9 L524.0,96.1 L525.0,96.0 L526.0,96.3 L527.0,96.2 L528.0,95.8 L529.0,96.3 L530.0,95.7 L531.0,96.0 L532.0,95.9 L533.0,95.8 L534.0,95.7 L535.0,96.2 L536.0,95.7 L537.0,96.0 L538.0,96.3 L539.0,95.7 L540.0,95.8 L541.0,96.1 L542.0,96.0 L543.0,96.1 L544.0,96.2 L545.0,95.8 L546.0,95.9 L547.0,95.9 L548.0,95.7 L549.0,96.3 L550.0,96.2 L551.0,96.2 L552.0,95.7 L553.0,96.2 L554.0,96.2 L555.0,96.0 L556.0,96.2 L557.0,96.0 L558.0,95.8 L559.0,95.7 L560.0,95.8 L561.0,95.7 L562.0,95.9 L563.0,96.2 L564.0,96.1 L565.0,96.2 L566.0,96.1 L567.0,95.8 L568.0,96.0 L569.0,96.0 L570.0,96.2 L571.0,96.0 L572.0,95.8 L573.0,96.1 L574.0,96.3 L575.0,95.8 L576.0,96.3 L577.0,95.7 L578.0,95.8 L579.0,95.8 L580.0,96.2 L581.0,96.3 L582.0,96.2 L583.0,95.9 L584.0,96.3 L585.0,95.9 L586.0,95.8 L587.0,96.3 L588.0,96.1 L589.0,96.1 L590.0,96.1 L591.0,96.3 L592.0,96.0 L593.0,96.2 L594.0,96.1 L595.0,96.3 L596.0,96.0" fill="none" stroke="#38c8d8" stroke-width="1.25" opacity=".95"/>
<path d="M18.0,117.8 L19.0,120.4 L20.0,126.9 L21.0,133.4 L22.0,136.2 L23.0,136.0 L24.0,136.4 L24.9,136.1 L25.9,136.0 L26.9,136.0 L27.9,136.4 L28.9,136.1 L29.9,136.1 L30.8,136.0 L31.8,136.0 L32.8,136.3 L33.8,136.3 L34.8,136.3 L35.8,136.3 L36.7,136.0 L37.7,136.2 L38.7,136.1 L39.7,136.3 L40.7,136.3 L41.6,136.4 L42.6,136.0 L43.6,136.3 L44.6,136.4 L45.6,136.4 L46.6,136.0 L47.5,136.1 L48.5,136.0 L49.5,136.0 L50.8,127.1 L52.0,117.8 L53.0,117.8 L54.0,117.8 L55.0,117.8 L56.0,117.6 L57.0,117.5 L58.0,117.5 L59.0,117.8 L60.0,117.6 L61.0,117.6 L62.0,117.7 L63.0,117.5 L64.0,117.6 L65.0,117.6 L66.0,117.8 L67.0,117.6 L68.0,117.6 L69.0,117.9 L70.0,117.7 L71.0,117.8 L72.0,117.7 L73.0,117.5 L74.0,117.7 L75.0,117.7 L76.0,117.8 L77.0,117.6 L78.0,117.8 L79.0,117.7 L80.2,126.8 L81.5,136.3 L82.5,136.0 L83.5,136.3 L84.5,136.1 L85.5,136.0 L86.5,136.1 L87.5,136.3 L88.5,136.4 L89.5,136.0 L90.5,136.2 L91.5,136.2 L92.5,136.3 L93.5,136.1 L94.5,136.2 L95.5,136.1 L96.5,136.3 L97.5,136.1 L98.5,136.4 L99.5,136.1 L100.5,136.1 L101.5,136.3 L102.5,136.2 L103.5,136.0 L104.5,136.3 L105.5,136.0 L106.5,136.3 L107.5,136.3 L108.5,136.3 L109.8,127.0 L111.0,117.6 L112.0,117.7 L113.0,117.7 L114.0,117.9 L115.0,117.5 L116.0,117.9 L117.0,117.5 L118.0,117.6 L119.0,117.6 L120.0,117.9 L121.0,117.7 L122.0,117.7 L123.0,117.9 L124.0,117.6 L125.0,117.7 L126.0,117.7 L127.0,117.8 L128.0,117.8 L129.0,117.8 L130.0,117.6 L131.0,117.6 L132.0,117.6 L133.0,117.8 L134.0,117.8 L135.0,117.8 L136.0,117.6 L137.0,117.7 L138.0,117.8 L139.2,127.0 L140.5,136.1 L141.5,136.2 L142.5,136.4 L143.6,136.1 L144.6,136.1 L145.6,136.1 L146.6,136.3 L147.6,136.3 L148.7,136.1 L149.7,136.1 L150.7,136.1 L151.7,136.1 L152.7,136.2 L153.8,136.1 L154.8,136.1 L155.8,136.1 L156.8,136.4 L157.8,136.3 L158.8,136.0 L159.9,136.4 L160.9,136.0 L161.9,136.2 L162.9,136.4 L163.9,136.3 L165.0,136.3 L166.0,136.2 L167.0,136.1 L168.2,127.0 L169.5,117.5 L170.5,117.6 L171.5,117.7 L172.6,117.5 L173.6,117.7 L174.6,117.8 L175.6,117.8 L176.6,117.7 L177.7,117.8 L178.7,117.7 L179.7,117.6 L180.7,117.7 L181.7,117.7 L182.8,117.8 L183.8,117.9 L184.8,117.7 L185.8,117.7 L186.8,117.8 L187.8,117.7 L188.9,117.6 L189.9,117.8 L190.9,117.9 L191.9,117.8 L192.9,117.8 L194.0,117.8 L195.0,117.8 L196.0,117.8 L197.2,126.9 L198.5,136.1 L199.5,136.3 L200.5,136.0 L201.4,136.2 L202.4,136.3 L203.4,136.3 L204.4,136.3 L205.4,136.1 L206.4,136.2 L207.3,136.2 L208.3,136.2 L209.3,136.2 L210.3,136.3 L211.3,136.4 L212.2,136.1 L213.2,136.3 L214.2,136.3 L215.2,136.2 L216.2,136.2 L217.2,136.4 L218.1,136.0 L219.1,136.2 L220.1,136.1 L221.1,136.3 L222.1,136.4 L223.1,136.2 L224.0,136.0 L225.0,136.2 L226.0,136.2 L227.2,127.0 L228.5,117.7 L229.5,117.8 L230.5,117.8 L231.5,117.7 L232.5,117.7 L233.5,117.9 L234.5,117.6 L235.5,117.8 L236.5,117.7 L237.5,117.8 L238.5,117.5 L239.5,117.9 L240.5,117.6 L241.5,117.5 L242.5,117.6 L243.5,117.7 L244.5,117.5 L245.5,117.7 L246.5,117.7 L247.5,117.8 L248.5,117.6 L249.5,117.6 L250.5,117.6 L251.5,117.8 L252.5,117.9 L253.5,117.7 L254.5,117.6 L255.5,117.8 L256.8,126.9 L258.0,136.1 L259.0,136.1 L260.0,136.3 L261.0,136.3 L262.0,136.3 L263.0,136.2 L264.0,136.2 L265.0,136.1 L266.0,136.4 L267.0,136.1 L268.0,136.3 L269.0,136.3 L270.0,136.3 L271.0,136.2 L272.0,136.1 L273.0,136.2 L274.0,136.1 L275.0,136.3 L276.0,136.1 L277.0,136.3 L278.0,136.1 L279.0,136.2 L280.0,136.1 L281.0,136.2 L282.0,136.1 L283.0,136.0 L284.0,133.2 L285.0,129.9 L286.0,129.9 L287.0,129.9 L288.0,130.0 L289.0,130.0 L290.0,130.1 L291.0,130.1 L292.0,129.9 L293.0,130.2 L294.0,130.1 L295.0,129.8 L296.0,130.1 L297.0,130.2 L298.0,130.1 L299.0,129.9 L300.0,130.1 L301.2,123.9 L302.5,117.5 L303.6,117.5 L304.6,117.9 L305.6,117.8 L306.7,117.6 L307.8,117.5 L308.8,117.6 L309.9,117.6 L310.9,117.8 L311.9,117.6 L313.0,117.6 L314.2,127.1 L315.5,136.3 L316.5,136.1 L317.5,136.4 L318.4,136.2 L319.4,136.3 L320.4,136.3 L321.4,136.4 L322.4,136.3 L323.4,136.3 L324.3,136.1 L325.3,136.3 L326.3,136.2 L327.3,136.3 L328.3,136.2 L329.2,136.4 L330.2,136.2 L331.2,136.1 L332.2,136.1 L333.2,136.1 L334.2,136.2 L335.1,136.0 L336.1,136.2 L337.1,136.1 L338.1,136.2 L339.1,136.2 L340.1,136.2 L341.0,136.3 L342.0,136.0 L343.0,136.3 L344.2,126.9 L345.5,117.7 L346.5,117.8 L347.5,117.8 L348.6,117.6 L349.6,117.7 L350.6,117.9 L351.6,117.5 L352.6,117.8 L353.7,117.8 L354.7,117.5 L355.7,117.7 L356.7,117.8 L357.7,117.9 L358.8,117.6 L359.8,117.9 L360.8,117.7 L361.8,117.7 L362.8,117.9 L363.8,117.5 L364.9,117.8 L365.9,117.8 L366.9,117.6 L367.9,117.8 L368.9,117.6 L370.0,117.7 L371.0,117.7 L372.0,117.8 L373.2,126.8 L374.5,136.2 L375.5,136.2 L376.5,136.2 L377.6,136.3 L378.6,136.1 L379.6,136.3 L380.6,136.2 L381.6,136.2 L382.7,136.1 L383.7,136.2 L384.7,136.4 L385.7,136.3 L386.7,136.3 L387.8,136.1 L388.8,136.1 L389.8,136.1 L390.8,136.2 L391.8,136.3 L392.8,136.3 L393.9,136.0 L394.9,136.3 L395.9,136.4 L396.9,136.2 L397.9,136.0 L399.0,136.1 L400.0,136.0 L401.0,136.1 L402.2,127.1 L403.5,117.7 L404.5,117.8 L405.5,117.8 L406.6,117.9 L407.6,117.7 L408.6,117.7 L409.6,117.8 L410.6,117.8 L411.7,117.7 L412.7,117.8 L413.7,117.6 L414.7,117.8 L415.7,117.7 L416.8,117.8 L417.8,117.5 L418.8,117.6 L419.8,117.5 L420.8,117.8 L421.8,117.9 L422.9,117.8 L423.9,117.6 L424.9,117.8 L425.9,117.8 L426.9,117.7 L428.0,117.6 L429.0,117.6 L430.0,117.7 L431.2,126.9 L432.5,136.2 L433.5,136.3 L434.5,136.4 L435.4,136.0 L436.4,136.2 L437.4,136.0 L438.4,136.0 L439.4,136.3 L440.4,136.2 L441.3,136.4 L442.3,136.2 L443.3,136.0 L444.3,136.2 L445.3,136.2 L446.2,136.4 L447.2,136.4 L448.2,136.2 L449.2,136.2 L450.2,136.0 L451.2,136.3 L452.1,136.1 L453.1,136.1 L454.1,136.0 L455.1,136.0 L456.1,136.3 L457.1,136.0 L458.0,136.4 L459.0,136.0 L460.0,136.3 L461.2,126.8 L462.5,117.5 L463.5,117.8 L464.5,117.6 L465.6,117.8 L466.6,117.6 L467.6,117.5 L468.6,117.8 L469.6,117.8 L470.7,117.8 L471.7,117.8 L472.7,117.5 L473.7,117.8 L474.7,117.8 L475.8,117.7 L476.8,117.9 L477.8,117.6 L478.8,117.9 L479.8,117.8 L480.8,117.5 L481.9,117.5 L482.9,117.8 L483.9,117.8 L484.9,117.5 L485.9,117.6 L487.0,117.8 L488.0,117.6 L489.0,117.8 L490.2,126.9 L491.5,136.0 L492.5,136.1 L493.5,136.2 L494.5,136.2 L495.5,136.3 L496.5,136.1 L497.5,136.3 L498.5,136.1 L499.5,136.3 L500.5,136.3 L501.5,136.2 L502.5,136.2 L503.5,136.3 L504.5,136.4 L505.5,136.3 L506.5,136.2 L507.5,136.1 L508.5,136.0 L509.5,136.4 L510.5,136.3 L511.5,136.3 L512.5,136.1 L513.5,136.2 L514.5,136.4 L515.5,136.3 L516.5,136.2 L517.5,136.1 L518.5,136.2 L519.8,127.1 L521.0,117.7 L522.0,117.8 L523.0,117.7 L524.0,117.9 L525.0,117.8 L526.0,117.6 L527.0,117.5 L528.0,117.6 L529.0,117.7 L530.0,117.7 L531.0,117.8 L532.0,117.9 L533.0,117.5 L534.0,117.8 L535.0,117.8 L536.0,117.8 L537.0,117.7 L538.0,117.6 L539.0,117.8 L540.0,117.8 L541.0,117.8 L542.0,117.9 L543.0,117.6 L544.0,117.5 L545.0,117.7 L546.0,117.8 L547.0,117.6 L548.0,117.8 L549.2,127.1 L550.5,136.1 L551.5,136.2 L552.5,136.3 L553.5,136.2 L554.5,136.1 L555.5,136.1 L556.5,136.3 L557.5,136.3 L558.5,136.2 L559.5,136.0 L560.5,136.3 L561.5,136.3 L562.5,136.1 L563.5,136.2 L564.5,136.4 L565.5,136.4 L566.5,136.2 L567.5,136.2 L568.5,136.2 L569.5,136.1 L570.5,136.1 L571.5,136.1 L572.5,136.3 L573.5,136.1 L574.5,136.2 L575.5,136.2 L576.5,136.2 L577.5,136.1 L578.8,126.8 L580.0,117.9 L581.0,117.6 L582.0,117.5 L583.0,117.8 L584.0,117.8 L585.0,117.6 L586.0,117.7 L587.0,117.6 L588.0,117.7 L589.0,117.5 L590.0,117.5 L591.0,117.9 L592.0,117.8 L593.0,117.7 L594.0,117.7 L595.0,117.6 L596.0,117.8" fill="none" stroke="#2a8a30" stroke-width=".9" opacity=".75"/>
<path d="M22.0,136.2 L23.0,136.3 L24.0,136.3 L25.1,136.3 L26.1,136.3 L27.1,136.2 L28.1,136.1 L29.1,136.1 L30.1,136.1 L31.2,136.1 L32.2,136.1 L33.2,136.2 L34.2,136.3 L35.2,136.2 L36.3,136.3 L37.3,136.3 L38.3,136.1 L39.3,136.2 L40.3,136.2 L41.4,136.1 L42.4,136.3 L43.4,136.2 L44.4,136.2 L45.4,136.2 L46.4,136.3 L47.5,136.2 L48.5,136.2 L49.5,136.2M52.0,117.6 L53.0,117.8 L54.0,117.8 L55.0,117.6 L56.0,117.6 L57.0,117.7 L58.0,117.7 L59.0,117.8 L60.0,117.8 L61.0,117.8 L62.0,117.6 L63.0,117.8 L64.0,117.7 L65.0,117.7 L66.0,117.8 L67.0,117.6 L68.0,117.6 L69.0,117.8 L70.0,117.8 L71.0,117.7 L72.0,117.7 L73.0,117.7 L74.0,117.8 L75.0,117.6 L76.0,117.7 L77.0,117.7 L78.0,117.6 L79.0,117.7M81.5,136.1 L82.5,136.1 L83.5,136.1 L84.5,136.2 L85.5,136.1 L86.5,136.2 L87.5,136.1 L88.5,136.1 L89.5,136.3 L90.5,136.1 L91.5,136.3 L92.5,136.3 L93.5,136.3 L94.5,136.1 L95.5,136.2 L96.5,136.1 L97.5,136.3 L98.5,136.3 L99.5,136.2 L100.5,136.2 L101.5,136.2 L102.5,136.3 L103.5,136.2 L104.5,136.2 L105.5,136.1 L106.5,136.1 L107.5,136.1 L108.5,136.2M111.0,117.7 L112.0,117.6 L113.0,117.8 L114.0,117.7 L115.0,117.7 L116.0,117.6 L117.0,117.7 L118.0,117.8 L119.0,117.7 L120.0,117.6 L121.0,117.7 L122.0,117.7 L123.0,117.8 L124.0,117.6 L125.0,117.8 L126.0,117.6 L127.0,117.8 L128.0,117.7 L129.0,117.6 L130.0,117.7 L131.0,117.7 L132.0,117.7 L133.0,117.6 L134.0,117.7 L135.0,117.8 L136.0,117.8 L137.0,117.8 L138.0,117.6M140.5,136.2 L141.5,136.3 L142.5,136.1 L143.6,136.2 L144.6,136.2 L145.6,136.3 L146.6,136.1 L147.6,136.3 L148.7,136.2 L149.7,136.1 L150.7,136.1 L151.7,136.3 L152.7,136.2 L153.8,136.1 L154.8,136.2 L155.8,136.3 L156.8,136.1 L157.8,136.2 L158.8,136.1 L159.9,136.1 L160.9,136.3 L161.9,136.2 L162.9,136.1 L163.9,136.1 L165.0,136.1 L166.0,136.2 L167.0,136.2M169.5,117.7 L170.5,117.6 L171.5,117.7 L172.6,117.7 L173.6,117.8 L174.6,117.7 L175.6,117.6 L176.6,117.6 L177.7,117.7 L178.7,117.7 L179.7,117.7 L180.7,117.6 L181.7,117.8 L182.8,117.7 L183.8,117.8 L184.8,117.8 L185.8,117.7 L186.8,117.6 L187.8,117.8 L188.9,117.7 L189.9,117.8 L190.9,117.7 L191.9,117.6 L192.9,117.8 L194.0,117.7 L195.0,117.6 L196.0,117.7M198.5,136.2 L199.5,136.1 L200.5,136.2 L201.6,136.2 L202.6,136.2 L203.6,136.1 L204.6,136.2 L205.6,136.3 L206.6,136.3 L207.7,136.2 L208.7,136.2 L209.7,136.2 L210.7,136.3 L211.7,136.1 L212.8,136.3 L213.8,136.3 L214.8,136.2 L215.8,136.2 L216.8,136.2 L217.9,136.2 L218.9,136.1 L219.9,136.3 L220.9,136.1 L221.9,136.1 L222.9,136.1 L224.0,136.2 L225.0,136.3 L226.0,136.1M228.5,117.6 L229.5,117.7 L230.5,117.6 L231.5,117.6 L232.5,117.7 L233.5,117.7 L234.5,117.7 L235.5,117.7 L236.5,117.6 L237.5,117.8 L238.5,117.7 L239.5,117.6 L240.5,117.6 L241.5,117.7 L242.5,117.7 L243.5,117.7 L244.5,117.6 L245.5,117.7 L246.5,117.6 L247.5,117.7 L248.5,117.8 L249.5,117.6 L250.5,117.7 L251.5,117.7 L252.5,117.6 L253.5,117.8 L254.5,117.8 L255.5,117.7M258.0,136.2 L259.0,136.3 L260.0,136.2 L261.0,136.2 L262.0,136.3 L263.0,136.3 L264.0,136.2 L265.0,136.1 L266.0,136.2 L267.0,136.2 L268.0,136.3 L269.0,136.3 L270.0,136.3 L271.0,136.3 L272.0,136.3 L273.0,136.1 L274.0,136.2 L275.0,136.3 L276.0,136.3 L277.0,136.1 L278.0,136.2 L279.0,136.2 L280.0,136.2 L281.0,136.2 L282.0,136.1 L283.0,136.2M285.0,130.0 L286.0,129.9 L287.0,129.9 L288.0,130.1 L289.0,130.1 L290.0,130.1 L291.0,130.0 L292.0,130.1 L293.0,130.1 L294.0,130.1 L295.0,129.9 L296.0,130.0 L297.0,130.0 L298.0,130.0 L299.0,130.0 L300.0,130.0M302.5,117.8 L303.6,117.7 L304.6,117.7 L305.6,117.7 L306.7,117.7 L307.8,117.8 L308.8,117.7 L309.9,117.7 L310.9,117.7 L311.9,117.6 L313.0,117.7M315.5,136.3 L316.5,136.2 L317.5,136.2 L318.6,136.2 L319.6,136.2 L320.6,136.1 L321.6,136.1 L322.6,136.1 L323.6,136.2 L324.7,136.2 L325.7,136.2 L326.7,136.1 L327.7,136.1 L328.7,136.2 L329.8,136.3 L330.8,136.2 L331.8,136.2 L332.8,136.2 L333.8,136.1 L334.9,136.2 L335.9,136.2 L336.9,136.2 L337.9,136.2 L338.9,136.2 L339.9,136.2 L341.0,136.1 L342.0,136.1 L343.0,136.2M345.5,117.7 L346.5,117.7 L347.5,117.6 L348.6,117.7 L349.6,117.8 L350.6,117.6 L351.6,117.7 L352.6,117.7 L353.7,117.7 L354.7,117.8 L355.7,117.7 L356.7,117.8 L357.7,117.6 L358.8,117.6 L359.8,117.8 L360.8,117.7 L361.8,117.6 L362.8,117.7 L363.8,117.7 L364.9,117.7 L365.9,117.6 L366.9,117.6 L367.9,117.8 L368.9,117.7 L370.0,117.6 L371.0,117.7 L372.0,117.7M374.5,136.2 L375.5,136.2 L376.5,136.3 L377.6,136.3 L378.6,136.2 L379.6,136.2 L380.6,136.2 L381.6,136.3 L382.7,136.2 L383.7,136.3 L384.7,136.2 L385.7,136.3 L386.7,136.1 L387.8,136.3 L388.8,136.1 L389.8,136.3 L390.8,136.2 L391.8,136.2 L392.8,136.3 L393.9,136.2 L394.9,136.2 L395.9,136.3 L396.9,136.3 L397.9,136.2 L399.0,136.2 L400.0,136.2 L401.0,136.2M403.5,117.7 L404.5,117.7 L405.5,117.7 L406.6,117.7 L407.6,117.7 L408.6,117.7 L409.6,117.8 L410.6,117.8 L411.7,117.7 L412.7,117.7 L413.7,117.6 L414.7,117.7 L415.7,117.6 L416.8,117.7 L417.8,117.7 L418.8,117.6 L419.8,117.8 L420.8,117.7 L421.8,117.8 L422.9,117.8 L423.9,117.8 L424.9,117.6 L425.9,117.7 L426.9,117.8 L428.0,117.6 L429.0,117.6 L430.0,117.7M432.5,136.2 L433.5,136.3 L434.5,136.3 L435.6,136.2 L436.6,136.3 L437.6,136.2 L438.6,136.2 L439.6,136.2 L440.6,136.2 L441.7,136.2 L442.7,136.2 L443.7,136.2 L444.7,136.3 L445.7,136.2 L446.8,136.2 L447.8,136.1 L448.8,136.2 L449.8,136.2 L450.8,136.2 L451.9,136.2 L452.9,136.3 L453.9,136.3 L454.9,136.2 L455.9,136.2 L456.9,136.2 L458.0,136.3 L459.0,136.2 L460.0,136.2M462.5,117.8 L463.5,117.6 L464.5,117.7 L465.6,117.8 L466.6,117.8 L467.6,117.7 L468.6,117.6 L469.6,117.8 L470.7,117.7 L471.7,117.8 L472.7,117.8 L473.7,117.8 L474.7,117.7 L475.8,117.6 L476.8,117.7 L477.8,117.7 L478.8,117.7 L479.8,117.6 L480.8,117.6 L481.9,117.7 L482.9,117.7 L483.9,117.7 L484.9,117.8 L485.9,117.7 L487.0,117.6 L488.0,117.7 L489.0,117.8M491.5,136.2 L492.5,136.2 L493.5,136.1 L494.5,136.2 L495.5,136.3 L496.5,136.2 L497.5,136.2 L498.5,136.1 L499.5,136.2 L500.5,136.2 L501.5,136.2 L502.5,136.2 L503.5,136.2 L504.5,136.3 L505.5,136.2 L506.5,136.2 L507.5,136.1 L508.5,136.1 L509.5,136.3 L510.5,136.1 L511.5,136.1 L512.5,136.1 L513.5,136.2 L514.5,136.3 L515.5,136.2 L516.5,136.3 L517.5,136.1 L518.5,136.1M521.0,117.8 L522.0,117.7 L523.0,117.7 L524.0,117.7 L525.0,117.6 L526.0,117.7 L527.0,117.6 L528.0,117.8 L529.0,117.7 L530.0,117.7 L531.0,117.7 L532.0,117.7 L533.0,117.6 L534.0,117.8 L535.0,117.7 L536.0,117.8 L537.0,117.7 L538.0,117.7 L539.0,117.6 L540.0,117.6 L541.0,117.8 L542.0,117.8 L543.0,117.7 L544.0,117.8 L545.0,117.8 L546.0,117.7 L547.0,117.7 L548.0,117.8M550.5,136.2 L551.5,136.3 L552.5,136.1 L553.5,136.2 L554.5,136.2 L555.5,136.1 L556.5,136.2 L557.5,136.3 L558.5,136.2 L559.5,136.3 L560.5,136.1 L561.5,136.1 L562.5,136.2 L563.5,136.1 L564.5,136.3 L565.5,136.2 L566.5,136.2 L567.5,136.1 L568.5,136.2 L569.5,136.2 L570.5,136.2 L571.5,136.1 L572.5,136.1 L573.5,136.3 L574.5,136.2 L575.5,136.1 L576.5,136.1 L577.5,136.2M580.0,117.6 L581.0,117.6 L582.0,117.7 L583.0,117.7 L584.0,117.6 L585.0,117.7 L586.0,117.6 L587.0,117.7 L588.0,117.8 L589.0,117.6 L590.0,117.7 L591.0,117.8 L592.0,117.8 L593.0,117.6 L594.0,117.7 L595.0,117.7 L596.0,117.7" fill="none" stroke="#165a18" stroke-width="2.4" opacity=".6"/>
<path d="M22.0,136.5 L23.0,136.0 L24.0,136.5 L25.1,136.2 L26.1,136.0 L27.1,136.2 L28.1,135.9 L29.1,136.3 L30.1,136.0 L31.2,136.5 L32.2,136.3 L33.2,136.1 L34.2,136.0 L35.2,136.3 L36.3,136.0 L37.3,136.5 L38.3,135.9 L39.3,136.2 L40.3,136.2 L41.4,136.0 L42.4,136.4 L43.4,136.1 L44.4,136.3 L45.4,136.2 L46.4,136.1 L47.5,136.1 L48.5,135.9 L49.5,136.0M52.0,117.9 L53.0,117.6 L54.0,117.8 L55.0,117.4 L56.0,117.7 L57.0,117.6 L58.0,117.7 L59.0,117.6 L60.0,117.4 L61.0,117.6 L62.0,117.5 L63.0,117.4 L64.0,117.9 L65.0,117.5 L66.0,117.6 L67.0,118.0 L68.0,117.9 L69.0,118.0 L70.0,118.0 L71.0,117.4 L72.0,117.5 L73.0,117.4 L74.0,117.8 L75.0,117.8 L76.0,117.6 L77.0,117.6 L78.0,117.8 L79.0,117.8M81.5,136.0 L82.5,136.4 L83.5,136.1 L84.5,136.3 L85.5,136.0 L86.5,135.9 L87.5,136.5 L88.5,136.4 L89.5,136.3 L90.5,135.9 L91.5,135.9 L92.5,136.0 L93.5,136.0 L94.5,136.1 L95.5,136.1 L96.5,135.9 L97.5,136.1 L98.5,136.3 L99.5,136.0 L100.5,136.4 L101.5,136.2 L102.5,136.4 L103.5,136.0 L104.5,136.2 L105.5,136.3 L106.5,136.1 L107.5,135.9 L108.5,136.4M111.0,117.9 L112.0,117.6 L113.0,117.4 L114.0,117.9 L115.0,117.8 L116.0,117.4 L117.0,117.5 L118.0,117.4 L119.0,117.9 L120.0,117.5 L121.0,118.0 L122.0,117.9 L123.0,117.4 L124.0,117.8 L125.0,117.6 L126.0,117.9 L127.0,117.9 L128.0,117.5 L129.0,117.4 L130.0,118.0 L131.0,117.6 L132.0,118.0 L133.0,117.8 L134.0,117.9 L135.0,117.9 L136.0,117.8 L137.0,117.7 L138.0,117.4M140.5,136.3 L141.5,136.1 L142.5,136.2 L143.6,136.5 L144.6,135.9 L145.6,136.4 L146.6,135.9 L147.6,136.3 L148.7,136.4 L149.7,136.0 L150.7,136.2 L151.7,136.5 L152.7,136.3 L153.8,136.2 L154.8,136.0 L155.8,135.9 L156.8,136.1 L157.8,136.1 L158.8,136.0 L159.9,136.1 L160.9,135.9 L161.9,136.3 L162.9,136.3 L163.9,136.0 L165.0,136.0 L166.0,136.2 L167.0,136.2M169.5,118.0 L170.5,117.6 L171.5,117.6 L172.6,118.0 L173.6,117.4 L174.6,117.7 L175.6,117.6 L176.6,117.9 L177.7,117.7 L178.7,117.9 L179.7,117.5 L180.7,117.8 L181.7,117.8 L182.8,117.7 L183.8,117.9 L184.8,117.9 L185.8,117.4 L186.8,117.6 L187.8,117.6 L188.9,117.5 L189.9,117.4 L190.9,117.5 L191.9,117.5 L192.9,117.8 L194.0,117.7 L195.0,117.4 L196.0,117.6M198.5,136.2 L199.5,136.1 L200.5,136.0 L201.6,135.9 L202.6,135.9 L203.6,136.5 L204.6,136.4 L205.6,135.9 L206.6,136.4 L207.7,136.5 L208.7,136.2 L209.7,135.9 L210.7,136.2 L211.7,136.2 L212.8,136.0 L213.8,136.2 L214.8,135.9 L215.8,136.5 L216.8,136.3 L217.9,136.3 L218.9,136.5 L219.9,136.3 L220.9,136.0 L221.9,136.0 L222.9,135.9 L224.0,135.9 L225.0,136.4 L226.0,136.4M228.5,117.6 L229.5,117.5 L230.5,117.8 L231.5,117.9 L232.5,118.0 L233.5,117.5 L234.5,117.9 L235.5,117.9 L236.5,117.9 L237.5,117.6 L238.5,117.5 L239.5,117.9 L240.5,117.6 L241.5,117.6 L242.5,117.7 L243.5,117.6 L244.5,117.9 L245.5,117.5 L246.5,117.4 L247.5,117.7 L248.5,117.8 L249.5,117.9 L250.5,117.8 L251.5,118.0 L252.5,118.0 L253.5,117.7 L254.5,117.7 L255.5,117.5M258.0,136.1 L259.0,136.3 L260.0,135.9 L261.0,136.3 L262.0,136.0 L263.0,136.2 L264.0,136.5 L265.0,135.9 L266.0,135.9 L267.0,136.2 L268.0,136.0 L269.0,136.4 L270.0,135.9 L271.0,136.4 L272.0,136.4 L273.0,136.4 L274.0,136.1 L275.0,136.0 L276.0,136.3 L277.0,136.2 L278.0,136.1 L279.0,136.1 L280.0,136.2 L281.0,136.3 L282.0,136.4 L283.0,136.5M285.0,129.8 L286.0,129.9 L287.0,130.0 L288.0,130.0 L289.0,129.9 L290.0,129.8 L291.0,129.7 L292.0,129.9 L293.0,130.0 L294.0,130.3 L295.0,130.3 L296.0,130.3 L297.0,130.3 L298.0,130.3 L299.0,130.1 L300.0,130.2M302.5,117.4 L303.6,117.8 L304.6,117.8 L305.6,117.6 L306.7,117.7 L307.8,118.0 L308.8,117.7 L309.9,117.8 L310.9,117.6 L311.9,117.6 L313.0,118.0M315.5,135.9 L316.5,136.0 L317.5,136.3 L318.6,136.2 L319.6,135.9 L320.6,136.3 L321.6,136.1 L322.6,136.3 L323.6,136.1 L324.7,136.2 L325.7,136.2 L326.7,136.1 L327.7,135.9 L328.7,136.0 L329.8,136.5 L330.8,136.2 L331.8,135.9 L332.8,136.5 L333.8,136.0 L334.9,135.9 L335.9,136.2 L336.9,136.0 L337.9,136.2 L338.9,136.2 L339.9,136.0 L341.0,136.3 L342.0,135.9 L343.0,136.2M345.5,117.8 L346.5,117.4 L347.5,117.6 L348.6,117.4 L349.6,117.7 L350.6,118.0 L351.6,117.7 L352.6,117.9 L353.7,117.9 L354.7,117.4 L355.7,118.0 L356.7,117.9 L357.7,117.4 L358.8,117.9 L359.8,117.6 L360.8,117.5 L361.8,118.0 L362.8,117.7 L363.8,117.9 L364.9,117.4 L365.9,117.9 L366.9,117.4 L367.9,117.5 L368.9,117.6 L370.0,117.4 L371.0,117.8 L372.0,117.5M374.5,136.1 L375.5,136.3 L376.5,136.1 L377.6,136.5 L378.6,136.3 L379.6,136.5 L380.6,136.2 L381.6,136.5 L382.7,136.5 L383.7,136.0 L384.7,136.4 L385.7,136.1 L386.7,136.4 L387.8,136.3 L388.8,136.4 L389.8,135.9 L390.8,136.1 L391.8,136.4 L392.8,136.5 L393.9,136.4 L394.9,135.9 L395.9,136.3 L396.9,135.9 L397.9,136.2 L399.0,136.4 L400.0,135.9 L401.0,136.5M403.5,117.8 L404.5,117.5 L405.5,117.5 L406.6,117.7 L407.6,117.9 L408.6,117.8 L409.6,117.4 L410.6,117.4 L411.7,117.4 L412.7,117.9 L413.7,117.5 L414.7,117.7 L415.7,117.6 L416.8,117.8 L417.8,117.6 L418.8,117.5 L419.8,118.0 L420.8,117.7 L421.8,117.8 L422.9,117.9 L423.9,118.0 L424.9,117.4 L425.9,117.6 L426.9,117.5 L428.0,117.7 L429.0,118.0 L430.0,117.9M432.5,135.9 L433.5,136.0 L434.5,136.4 L435.6,136.3 L436.6,136.1 L437.6,136.2 L438.6,136.0 L439.6,136.4 L440.6,136.1 L441.7,136.5 L442.7,136.3 L443.7,135.9 L444.7,136.1 L445.7,136.0 L446.8,136.5 L447.8,136.3 L448.8,135.9 L449.8,136.0 L450.8,136.1 L451.9,136.2 L452.9,136.3 L453.9,136.1 L454.9,136.1 L455.9,135.9 L456.9,136.3 L458.0,136.1 L459.0,135.9 L460.0,136.2M462.5,118.0 L463.5,117.4 L464.5,117.5 L465.6,117.8 L466.6,117.5 L467.6,117.5 L468.6,117.7 L469.6,117.5 L470.7,117.7 L471.7,117.7 L472.7,118.0 L473.7,118.0 L474.7,117.4 L475.8,117.7 L476.8,117.9 L477.8,118.0 L478.8,117.9 L479.8,117.8 L480.8,117.8 L481.9,117.6 L482.9,117.5 L483.9,117.9 L484.9,118.0 L485.9,118.0 L487.0,117.8 L488.0,117.6 L489.0,117.9M491.5,136.4 L492.5,136.2 L493.5,136.3 L494.5,136.1 L495.5,136.2 L496.5,136.1 L497.5,135.9 L498.5,136.1 L499.5,136.1 L500.5,136.5 L501.5,136.2 L502.5,136.1 L503.5,136.0 L504.5,136.0 L505.5,136.1 L506.5,135.9 L507.5,135.9 L508.5,136.5 L509.5,136.2 L510.5,136.2 L511.5,136.2 L512.5,136.1 L513.5,136.0 L514.5,135.9 L515.5,136.1 L516.5,136.1 L517.5,136.4 L518.5,136.2M521.0,118.0 L522.0,117.6 L523.0,118.0 L524.0,117.8 L525.0,117.4 L526.0,117.5 L527.0,117.8 L528.0,118.0 L529.0,117.6 L530.0,117.9 L531.0,117.6 L532.0,118.0 L533.0,117.4 L534.0,117.7 L535.0,118.0 L536.0,117.5 L537.0,117.5 L538.0,117.4 L539.0,117.5 L540.0,117.5 L541.0,117.8 L542.0,117.5 L543.0,117.6 L544.0,117.5 L545.0,117.8 L546.0,118.0 L547.0,117.8 L548.0,117.5M550.5,136.4 L551.5,136.5 L552.5,136.3 L553.5,135.9 L554.5,136.4 L555.5,136.5 L556.5,136.1 L557.5,135.9 L558.5,136.0 L559.5,136.2 L560.5,136.5 L561.5,136.3 L562.5,136.5 L563.5,136.0 L564.5,136.1 L565.5,136.4 L566.5,136.3 L567.5,136.1 L568.5,136.3 L569.5,136.1 L570.5,135.9 L571.5,136.1 L572.5,135.9 L573.5,136.3 L574.5,136.1 L575.5,136.2 L576.5,136.3 L577.5,136.0M580.0,117.7 L581.0,117.4 L582.0,118.0 L583.0,117.7 L584.0,118.0 L585.0,117.4 L586.0,117.8 L587.0,117.9 L588.0,117.6 L589.0,117.4 L590.0,117.5 L591.0,117.4 L592.0,117.9 L593.0,117.4 L594.0,117.9 L595.0,117.6 L596.0,117.7" fill="none" stroke="#2cd034" stroke-width="1.05"/>
<path d="M17.5,173.1 L18.5,166.5 L19.5,160.1 L20.4,159.7 L21.3,158.6 L22.2,157.5 L23.2,155.9 L24.1,155.2 L25.0,154.9 L26.0,154.9 L27.1,154.5 L28.1,154.8 L29.2,154.9 L30.2,154.4 L31.2,154.2 L32.3,154.3 L33.3,154.5 L34.4,153.8 L35.4,153.7 L36.5,154.0 L37.5,154.1 L38.5,155.5 L39.6,158.9 L40.6,164.8 L41.6,170.8 L42.7,177.7 L43.7,182.7 L44.8,186.4 L45.8,187.7 L46.8,187.5 L47.9,187.5 L49.0,187.2 L50.0,186.8 L51.0,186.1 L52.0,182.1 L53.0,176.7 L54.0,170.5 L55.0,164.7 L56.0,159.6 L57.0,155.5 L58.0,154.2 L59.0,154.7 L60.0,154.3 L61.0,154.8 L62.0,154.4 L63.0,154.5 L64.0,154.2 L65.0,154.5 L66.0,154.2 L67.0,154.0 L68.0,154.4 L69.0,153.8 L70.0,154.2 L71.0,153.7 L72.0,154.1 L73.0,154.7 L74.0,157.4 L75.0,160.5 L76.0,165.4 L77.0,170.4 L78.0,175.9 L79.0,180.5 L80.0,183.9 L81.0,186.0 L82.0,186.8 L83.0,186.8 L84.0,187.0 L85.0,186.9 L86.0,187.0 L87.0,187.4 L88.0,187.5 L89.0,187.4 L90.0,188.0 L91.0,187.6 L92.0,187.9 L93.0,187.8 L94.0,188.4 L95.0,188.5 L96.0,188.2 L97.0,188.6 L98.0,188.7 L99.0,188.3 L100.0,188.4 L101.0,188.5 L102.0,188.8 L103.0,188.2 L103.9,188.6 L104.9,188.5 L105.9,188.3 L106.9,188.4 L107.9,188.5 L108.9,188.0 L109.8,188.4 L110.8,188.0 L111.8,188.2 L112.8,188.2 L113.8,187.7 L114.8,188.1 L115.8,188.1 L116.7,187.5 L117.7,187.3 L118.7,187.3 L119.7,187.8 L120.7,187.1 L121.7,187.6 L122.6,187.0 L123.6,187.4 L124.6,186.9 L125.6,186.9 L126.6,187.2 L127.6,186.8 L128.5,186.9 L129.5,187.3 L130.5,187.2 L131.5,187.3 L132.4,186.1 L133.4,181.8 L134.3,176.6 L135.2,170.7 L136.2,164.3 L137.1,158.5 L138.1,155.3 L139.0,153.8 L139.9,154.0 L140.8,153.7 L141.6,153.7 L142.5,154.3 L143.5,154.7 L144.5,157.5 L145.5,160.7 L146.5,165.7 L147.5,170.7 L148.5,176.2 L149.5,180.8 L150.5,184.9 L151.5,186.9 L152.5,188.2 L153.8,188.0 L155.0,187.7 L155.9,186.6 L156.9,183.0 L157.8,177.8 L158.8,170.9 L159.7,164.3 L160.6,159.3 L161.6,155.6 L162.5,154.2 L163.5,153.8 L164.4,153.8 L165.4,153.9 L166.4,153.8 L167.3,153.8 L168.3,154.2 L169.3,154.1 L170.2,154.3 L171.2,154.2 L172.2,154.0 L173.2,154.5 L174.1,154.5 L175.1,154.5 L176.1,154.5 L177.0,154.6 L178.0,154.8 L179.0,155.6 L180.0,157.9 L180.9,161.3 L181.9,165.9 L182.9,171.2 L183.9,176.8 L184.9,181.0 L185.8,184.7 L186.8,187.1 L187.8,187.8 L188.8,187.8 L189.8,185.4 L190.9,183.1 L191.9,179.8 L192.9,175.2 L193.9,171.1 L194.9,166.5 L195.9,162.3 L196.9,158.8 L198.0,156.0 L199.0,154.8 L200.0,154.2 L201.0,154.8 L202.0,155.9 L203.0,159.0 L204.0,162.1 L205.0,166.3 L206.0,170.5 L207.0,174.6 L208.0,179.1 L209.0,181.8 L210.0,185.0 L211.0,186.7 L212.0,187.0 L213.0,186.4 L214.0,184.7 L215.0,181.1 L216.0,177.4 L217.0,173.0 L218.0,168.1 L219.0,163.8 L220.0,159.6 L221.0,156.6 L222.0,154.7 L223.0,154.1 L224.0,154.4 L225.0,156.3 L226.0,158.9 L227.0,162.1 L228.0,166.3 L229.0,170.3 L230.0,175.1 L231.0,178.7 L232.0,182.3 L233.0,184.8 L234.0,186.4 L235.0,186.8 L236.0,186.2 L237.0,185.1 L238.0,182.2 L239.0,178.8 L240.0,174.8 L241.0,170.7 L242.0,166.0 L243.0,162.0 L244.0,159.1 L245.0,156.2 L246.0,154.7 L247.0,154.2 L248.0,154.9 L249.0,156.9 L250.0,159.4 L251.0,163.6 L252.0,168.4 L253.0,173.1 L254.0,177.1 L255.0,181.1 L256.0,184.2 L257.0,186.1 L258.0,186.9 L259.0,186.7 L260.0,184.8 L261.0,182.1 L262.0,178.5 L263.0,174.7 L264.0,170.8 L265.0,166.4 L266.0,162.2 L267.0,158.8 L268.0,156.4 L269.0,154.7 L270.0,153.8 L271.0,154.7 L272.0,156.1 L273.0,158.8 L274.0,162.1 L275.0,166.1 L276.0,170.4 L277.0,174.7 L278.0,178.4 L279.0,182.0 L280.0,184.8 L281.0,186.1 L282.0,186.8 L283.0,186.5 L284.0,184.2 L285.0,181.2 L286.0,177.2 L287.0,173.1 L288.0,167.9 L289.0,163.7 L290.0,159.9 L291.0,156.4 L292.0,154.6 L293.0,154.2 L294.0,154.6 L295.0,156.1 L296.0,158.5 L297.0,162.2 L298.0,166.1 L299.0,170.6 L300.0,174.6 L301.0,178.7 L302.0,182.3 L303.0,185.0 L304.0,186.3 L305.0,186.9 L306.0,186.5 L307.0,185.1 L308.0,182.0 L309.0,179.1 L310.0,174.9 L311.0,170.4 L312.0,166.3 L313.0,162.1 L314.0,158.5 L315.0,156.4 L316.0,154.5 L317.0,154.0 L318.0,154.7 L319.0,156.9 L320.0,159.9 L321.0,163.3 L322.0,168.2 L323.0,172.8 L324.0,177.3 L325.0,181.5 L326.0,184.3 L327.0,186.3 L328.0,187.3 L329.0,186.4 L330.0,184.8 L331.0,182.2 L332.0,179.0 L333.0,174.9 L334.0,170.7 L335.0,166.2 L336.0,161.9 L337.0,159.0 L338.0,156.2 L339.0,154.8 L340.0,154.2 L341.0,154.9 L342.0,158.1 L343.0,162.6 L344.0,168.3 L345.0,172.4 L346.0,175.6 L347.0,177.2 L348.0,175.4 L349.0,170.8 L350.0,166.0 L351.0,161.8 L352.0,160.0 L353.0,160.5 L354.0,163.3 L355.0,166.7 L356.0,171.2 L357.0,176.2 L358.0,180.5 L359.0,184.1 L360.0,185.9 L361.0,186.9 L362.0,186.3 L363.0,184.0 L364.0,181.6 L365.0,177.2 L366.0,172.7 L367.0,168.0 L368.0,163.5 L369.0,159.9 L370.0,156.7 L371.0,154.7 L372.0,153.9 L373.0,153.7 L374.0,153.9 L375.0,154.3 L376.0,154.3 L377.0,154.4 L378.0,154.0 L379.0,154.1 L380.0,154.0 L381.0,154.4 L382.0,154.4 L383.0,154.6 L384.0,154.6 L385.0,154.8 L386.0,154.7 L387.0,155.1 L388.0,154.7 L389.0,155.2 L390.0,155.0 L391.0,154.7 L392.0,154.9 L393.0,156.2 L394.0,159.6 L395.0,164.9 L396.0,170.9 L397.0,177.0 L398.0,182.5 L399.0,185.6 L400.0,187.1 L401.0,186.4 L402.0,183.9 L403.0,180.2 L404.0,175.9 L405.0,170.5 L406.0,165.7 L407.0,160.5 L408.0,157.1 L409.0,154.9 L410.0,153.7 L411.0,154.8 L412.0,155.8 L413.0,158.6 L414.0,161.5 L415.0,165.8 L416.0,169.5 L417.0,173.7 L418.0,177.2 L419.0,180.6 L420.0,183.0 L421.0,184.3 L422.0,184.8 L423.0,184.6 L424.0,182.3 L425.0,179.9 L426.0,175.7 L427.0,171.4 L428.0,167.0 L429.0,163.3 L430.0,159.7 L431.0,156.4 L432.0,154.7 L433.0,153.8 L434.0,154.8 L435.0,156.3 L436.0,158.6 L437.0,161.9 L438.0,166.4 L439.0,170.2 L440.0,175.0 L441.0,178.6 L442.0,182.0 L443.0,184.8 L444.0,186.3 L445.0,187.0 L446.0,186.2 L447.0,185.1 L448.0,182.0 L449.0,179.0 L450.0,174.5 L451.0,170.7 L452.0,166.6 L453.0,162.2 L454.0,158.5 L455.0,156.1 L456.0,154.7 L457.0,153.8 L458.0,154.5 L459.0,155.6 L460.0,158.1 L461.0,161.3 L462.0,164.6 L463.0,168.6 L464.0,172.2 L465.0,176.6 L466.0,179.6 L467.0,183.1 L468.0,185.5 L469.0,186.8 L470.0,187.0 L471.0,186.9 L472.0,186.9 L473.0,187.3 L474.0,187.2 L475.0,187.6 L476.0,187.1 L477.0,187.4 L478.0,187.8 L479.0,187.7 L480.0,187.8 L481.0,187.5 L482.0,187.7 L483.0,187.8 L484.0,188.3 L485.0,188.2 L486.0,186.5 L487.0,183.3 L488.0,177.2 L489.0,171.1 L490.0,164.8 L491.0,158.9 L492.0,155.6 L493.0,154.1 L494.0,153.7 L495.0,153.9 L496.0,154.0 L497.0,153.8 L498.0,154.2 L499.0,153.8 L500.0,154.2 L501.0,153.9 L502.0,153.7 L503.0,154.0 L504.0,153.7 L505.0,154.0 L506.0,154.2 L507.0,154.1 L508.0,154.0 L509.0,154.7 L510.0,157.9 L511.0,162.0 L512.0,167.7 L513.0,173.1 L514.0,178.8 L515.0,183.0 L516.0,185.9 L517.0,187.1 L518.0,186.8 L519.0,186.8 L520.0,187.4 L521.0,187.1 L522.0,187.6 L523.0,187.7 L524.0,187.5 L525.0,187.4 L526.0,187.5 L527.0,188.1 L528.0,187.7 L529.0,188.0 L530.0,188.0 L531.0,187.7 L532.0,187.9 L533.0,187.6 L534.0,187.8 L535.0,187.7 L536.0,187.5 L537.0,187.2 L538.0,187.3 L539.0,187.0 L540.0,186.9 L541.0,186.9 L542.0,187.3 L543.0,187.0 L544.0,186.2 L545.0,182.7 L546.0,178.8 L547.0,172.9 L548.0,167.3 L549.0,161.5 L550.0,157.1 L551.0,153.8 L552.0,153.2 L553.0,152.8 L554.0,152.8 L555.0,152.7 L556.0,153.0 L557.0,153.1 L558.0,152.9 L559.0,153.4 L560.0,152.9 L561.0,153.3 L562.0,153.1 L563.0,153.4 L564.0,153.5 L565.0,153.5 L566.0,153.2 L567.0,153.3 L568.0,153.7 L569.0,154.0 L570.0,153.4 L571.0,153.9 L572.0,154.0 L573.0,154.1 L574.0,153.9 L575.0,154.3 L576.0,154.1 L577.0,154.5 L578.0,153.9 L579.0,154.7 L580.0,154.4 L581.0,154.4 L582.0,154.3 L583.0,154.4 L584.0,154.8 L585.0,154.8 L586.0,154.5 L587.0,154.7 L588.0,154.6 L589.0,154.7 L590.0,154.7 L591.0,154.8 L592.0,155.3 L593.0,155.3 L594.0,155.2 L595.0,155.0 L596.0,155.0" fill="none" stroke="#cccc48" stroke-width="1.0" opacity=".93"/>

<text x="62" y="34.5" font-size="6" font-style="italic" fill="#e0e040">clock</text>
<text x="63" y="50" font-size="5.5" font-style="italic" fill="#30b8c8" opacity=".8">data</text>
<text x="214" y="84.3" font-size="10" font-style="italic" fill="#30c4dc" stroke="#30c4dc" stroke-width=".25" textLength="83" lengthAdjust="spacingAndGlyphs">Setup time Ch1, Ch2</text>
<text x="276.5" y="115.3" font-size="10" font-style="italic" fill="#30d040" stroke="#30d040" stroke-width=".25" textLength="57" lengthAdjust="spacingAndGlyphs">Transition Ch1</text>
<text x="336.5" y="151" font-size="10" font-style="italic" fill="#e0e040" stroke="#e0e040" stroke-width=".25" textLength="43.5" lengthAdjust="spacingAndGlyphs">Glitch Ch4</text>
<circle cx="6.8" cy="54.5" r="5.6" fill="#20d4ec"/><circle cx="5.8" cy="53.1" r="3.6" fill="#a0f4fc" opacity=".6"/><path d="M11.5,54.2 h3.2 v-2.4 l5,3.2 l-5,3.2 v-2.4 h-3.2z" fill="#20d4ec"/><text x="6.6" y="56.5" font-size="5.5" font-weight="bold" text-anchor="middle" fill="#087888" opacity=".8">2</text>
<circle cx="6.8" cy="38.3" r="6.2" fill="#f4e424"/><circle cx="5.8" cy="36.9" r="3.6" fill="#fcfc98" opacity=".6"/><path d="M11.5,38.0 h3.2 v-2.4 l5,3.2 l-5,3.2 v-2.4 h-3.2z" fill="#f4e424"/><text x="6.6" y="40.3" font-size="5.5" font-weight="bold" text-anchor="middle" fill="#a08000" opacity=".8">1</text>
<circle cx="6.8" cy="98.6" r="5.4" fill="#20d4ec"/><circle cx="5.8" cy="97.19999999999999" r="3.6" fill="#a0f4fc" opacity=".6"/><path d="M11.5,98.3 h3.2 v-2.4 l5,3.2 l-5,3.2 v-2.4 h-3.2z" fill="#20d4ec"/><text x="6.6" y="100.6" font-size="5.5" font-weight="bold" text-anchor="middle" fill="#087888" opacity=".8">2</text>
<circle cx="6.8" cy="89.5" r="6.2" fill="#f4e424"/><circle cx="5.8" cy="88.1" r="3.6" fill="#fcfc98" opacity=".6"/><path d="M11.5,89.2 h3.2 v-2.4 l5,3.2 l-5,3.2 v-2.4 h-3.2z" fill="#f4e424"/><text x="6.6" y="91.5" font-size="5.5" font-weight="bold" text-anchor="middle" fill="#a08000" opacity=".8">1</text>
<circle cx="6.8" cy="117" r="6.2" fill="#f03c34"/><circle cx="5.8" cy="115.6" r="3.6" fill="#fca098" opacity=".6"/><path d="M11.5,116.7 h3.2 v-2.4 l5,3.2 l-5,3.2 v-2.4 h-3.2z" fill="#f03c34"/><text x="6.6" y="119" font-size="5.5" font-weight="bold" text-anchor="middle" fill="#a01010" opacity=".8">3</text>
<path d="M11.5,131 h3.2 v-2.4 l5,3.2 l-5,3.2 v-2.4 h-3.2z" fill="#20dc28"/>
<circle cx="6.8" cy="137.2" r="6.2" fill="#20dc28"/><circle cx="5.8" cy="135.79999999999998" r="3.6" fill="#a0fca0" opacity=".6"/><path d="M11.5,136.89999999999998 h3.2 v-2.4 l5,3.2 l-5,3.2 v-2.4 h-3.2z" fill="#20dc28"/><text x="6.6" y="139.2" font-size="5.5" font-weight="bold" text-anchor="middle" fill="#087010" opacity=".8">1</text>
<circle cx="6.8" cy="171" r="6.2" fill="#f0e828"/><circle cx="5.8" cy="169.6" r="3.6" fill="#fcfc98" opacity=".6"/><path d="M11.5,170.7 h3.2 v-2.4 l5,3.2 l-5,3.2 v-2.4 h-3.2z" fill="#f0e828"/><text x="6.6" y="173" font-size="5.5" font-weight="bold" text-anchor="middle" fill="#a08000" opacity=".8">4</text>
<circle cx="6.8" cy="185" r="6.2" fill="#a8e428"/><circle cx="5.8" cy="183.6" r="3.6" fill="#e4fc98" opacity=".6"/><path d="M11.5,184.7 h3.2 v-2.4 l5,3.2 l-5,3.2 v-2.4 h-3.2z" fill="#a8e428"/><text x="6.6" y="187" font-size="5.5" font-weight="bold" text-anchor="middle" fill="#508000" opacity=".8">2</text>

</svg>
<div id="menubar" class="abs"><svg class="abs" style="left:0;top:0" width="420" height="18" font-family="'Liberation Sans',sans-serif" font-weight="bold" font-size="8.3" fill="#e6e6fa"><text x="5" y="12.3" textLength="11" lengthAdjust="spacingAndGlyphs">File</text><text x="25" y="12.3" textLength="11" lengthAdjust="spacingAndGlyphs">Edit</text><text x="45" y="12.3" textLength="21" lengthAdjust="spacingAndGlyphs">Vertical</text><text x="76" y="12.3" textLength="29" lengthAdjust="spacingAndGlyphs">Horiz/Acq</text><text x="114" y="12.3" textLength="12" lengthAdjust="spacingAndGlyphs">Trig</text><text x="134" y="12.3" textLength="23" lengthAdjust="spacingAndGlyphs">Display</text><text x="164" y="12.3" textLength="24" lengthAdjust="spacingAndGlyphs">Cursors</text><text x="197" y="12.3" textLength="25.5" lengthAdjust="spacingAndGlyphs">Measure</text><text x="232" y="12.3" textLength="15" lengthAdjust="spacingAndGlyphs">Mask</text><text x="256" y="12.3" textLength="15" lengthAdjust="spacingAndGlyphs">Math</text><text x="279" y="12.3" textLength="29" lengthAdjust="spacingAndGlyphs">MyScope</text><text x="316" y="12.3" textLength="23" lengthAdjust="spacingAndGlyphs">Analyze</text><text x="348" y="12.3" textLength="21" lengthAdjust="spacingAndGlyphs">Utilities</text><text x="378" y="12.3" textLength="13" lengthAdjust="spacingAndGlyphs">Help</text></svg><i class="s" style="left:20px"></i><i class="s" style="left:40.5px"></i><i class="s" style="left:71.5px"></i><i class="s" style="left:109px"></i><i class="s" style="left:130px"></i><i class="s" style="left:160px"></i><i class="s" style="left:192px"></i><i class="s" style="left:227px"></i><i class="s" style="left:251.5px"></i><i class="s" style="left:275px"></i><i class="s" style="left:311px"></i><i class="s" style="left:343px"></i><i class="s" style="left:372.5px"></i><i class="s" style="left:395px"></i><div class="abs" style="left:397px;top:2px;width:15px;height:15px;border-radius:2px;background:linear-gradient(#a8c8f8,#5888e0);box-sizing:border-box;border:1px solid #88a8e8"></div><svg class="abs" style="left:397px;top:2px" width="15" height="15"><path d="M5.3,6.3h4.6l-2.3,3.6z" fill="#101050"/></svg><span class="abs" style="left:524px;top:2.5px;font-size:11px;font-weight:bold;color:#f4f4ff;line-height:13px;text-shadow:0 0 1px #fff">Tek</span><div class="abs" style="left:554px;top:2px;width:15px;height:14px;border-radius:2.5px;background:linear-gradient(#64a0f0,#2c64d4);box-sizing:border-box;border:1px solid #5c8ce8"></div><div class="abs" style="left:558px;top:10.5px;width:6.5px;height:1.9px;background:#dce8ff"></div><div class="abs" style="left:577.5px;top:2px;width:15.5px;height:14px;border-radius:2.5px;background:linear-gradient(#f07058,#d42c1c);box-sizing:border-box;border:1px solid #e87868"></div><svg class="abs" style="left:577.5px;top:2px" width="16" height="15"><path d="M5,4.2l5.6,6.4M10.6,4.2l-5.6,6.4" stroke="#fbe0d8" stroke-width="1.4" fill="none"/></svg></div>
<div class="abs" style="left:9.6px;top:208px;width:585.4px;height:57.8px;background:#000"></div><div class="box" style="left:12px;top:210px;width:329px;height:55px"></div><div class="box" style="left:346px;top:210px;width:109px;height:14.5px"></div><div class="box" style="left:458px;top:210px;width:135px;height:55px"></div><span class="pill" style="left:17.5px;top:214.5px;background:linear-gradient(#f4f470,#c8c820)">C1</span><span class="pill" style="left:17.5px;top:227.0px;background:linear-gradient(#70f0f0,#20b8c0)">C2</span><span class="pill" style="left:17.5px;top:239.5px;background:linear-gradient(#60e860,#18a820)">C4</span><span class="pill" style="left:17.5px;top:251.5px;background:linear-gradient(#f0f060,#c0b820)">Z1C1</span><span class="pill" style="left:181px;top:214.5px;background:linear-gradient(#70f0f0,#20b0c0)">Z1C2</span><span class="pill" style="left:181px;top:227.0px;background:linear-gradient(#60e860,#18a820)">Z1C4</span><span class="pill" style="left:181px;top:239.5px;background:linear-gradient(#f08078,#c84038)">Z3C1</span><span class="pill" style="left:181px;top:251.5px;background:linear-gradient(#f060e8,#b820b0)">Z3C4</span><span class="pill" style="left:360px;top:214.5px;background:linear-gradient(#70f0f0,#20b0c0)">C2</span>
<div class="abs" style="left:0;top:266px;width:600px;height:184px;background:linear-gradient(#6072c4,#5c6cb8 30%)"></div><div class="abs" style="left:7.5px;top:270px;width:590.5px;height:173.5px;background:#5667ae;border:1.2px solid #9aaae6;border-radius:3px;box-sizing:border-box"></div><div class="abs" style="left:0;top:443.5px;width:600px;height:7px;background:#5c6cb8"></div><div class="abs" style="left:53px;top:276px;width:430px;height:158px;border-radius:6px 6px 5px 5px;background:linear-gradient(90deg,#a6b6ea 0%,#90a6e0 25%,#7090d0 55%,#6484c8 75%,#6080c4 100%);box-shadow:1px 2px 2px #3c4c98"></div><div class="abs" style="left:53px;top:276px;width:430px;height:13.5px;border-radius:6px 6px 0 0;background:linear-gradient(90deg,#b8c8f2,#a4b6e6 50%,#98acdc);border-bottom:1px solid #b4c4f0"></div><span class="abs" style="left:58px;top:278px;font-size:8.8px;font-weight:bold;color:#141c70;line-height:11px;white-space:nowrap">Results: Mark Table</span><div class="abs" style="left:486px;top:272px;width:110px;height:170px;background:#5868b0"></div><div class="tab" style="top:293px">Select</div><div class="tab" style="top:313.3px">Configure</div><div class="tab" style="top:355px">View</div><div class="tab" style="top:375.3px">Mode</div><div class="tab" style="top:334px;height:21px;background:linear-gradient(#f8a040,#f08c24);border-top:1px solid #f8c080"><span style="display:inline-block;border:1px solid #fff;line-height:9px;padding:0 1.5px;vertical-align:middle;position:relative;top:-1px">Results</span></div><table style="left:69.5px;top:294px;width:311px;background:#fff"><colgroup><col style="width:14px"><col style="width:23.5px"><col style="width:37px"><col style="width:18px"><col style="width:36.5px"><col style="width:18px"><col style="width:18.3px"><col style="width:18.2px"><col style="width:18px"><col style="width:18px"><col style="width:91px"></colgroup><tr><td rowspan="2"></td><td rowspan="2" style="font-weight:bold;font-size:6.2px;color:#223">Index</td><td rowspan="2" style="font-weight:bold;font-size:6.2px;color:#223">Type</td><td rowspan="2" style="font-weight:bold;font-size:6.2px;color:#223">Src</td><td rowspan="2" style="font-weight:bold;font-size:6.2px;color:#223">Location</td><td colspan="5" style="font-weight:bold;font-size:6.1px;height:8px;line-height:8px">Time Delta</td><td rowspan="2" style="font-weight:bold;font-size:6.2px;color:#223">Description</td></tr><tr><td style="font-size:6.4px;height:8px;line-height:7.5px;color:#334">sec</td><td style="font-size:6.4px;height:8px;line-height:7.5px;color:#334">ms</td><td style="font-size:6.4px;height:8px;line-height:7.5px;color:#334">us</td><td style="font-size:6.4px;height:8px;line-height:7.5px;color:#334">ns</td><td style="font-size:6.4px;height:8px;line-height:7.5px;color:#334">ps</td></tr><tr><td style="background:#f0a060">Z1</td><td style="background:#f0a060">1</td><td style="background:#f0a060">Setup/Hol</td><td style="background:#f0a060">C2</td><td style="background:#d4f4c8;color:#3c443c">-600ps</td><td style="background:#d4f4c8;border-color:#a4b4a0 transparent;color:#4a524a"></td><td style="background:#f0f6c4;border-color:#a4b4a0 transparent;color:#4a524a"></td><td style="background:#d4f4c8;border-color:#a4b4a0 transparent;color:#4a524a"></td><td style="background:#f0f6c4;border-color:#a4b4a0 transparent;color:#4a524a"></td><td style="background:#d4f4c8;border-color:#a4b4a0 transparent;color:#4a524a"></td><td style="background:#f0a060">-Clk, Setup violation: 600p</td></tr><tr><td style="background:#fff"></td><td style="background:#fff">2</td><td style="background:#fff">Transition</td><td style="background:#fff">C1</td><td style="background:#d4f4c8;color:#3c443c">-444.96ns</td><td style="background:#d4f4c8;border-color:#a4b4a0 transparent;color:#4a524a">000</td><td style="background:#f0f6c4;border-color:#a4b4a0 transparent;color:#4a524a">000</td><td style="background:#d4f4c8;border-color:#a4b4a0 transparent;color:#4a524a">000</td><td style="background:#f0f6c4;border-color:#a4b4a0 transparent;color:#4a524a">444</td><td style="background:#d4f4c8;border-color:#a4b4a0 transparent;color:#4a524a">360</td><td style="background:#fff">+/-Transition: time=5.44ns</td></tr><tr><td style="background:#c4f0c4">Z2</td><td style="background:#c4f0c4">3</td><td style="background:#c4f0c4">Transition</td><td style="background:#c4f0c4">C1</td><td style="background:#d4f4c8;color:#3c443c">-304.92ns</td><td style="background:#d4f4c8;border-color:#a4b4a0 transparent;color:#4a524a">000</td><td style="background:#f0f6c4;border-color:#a4b4a0 transparent;color:#4a524a">000</td><td style="background:#d4f4c8;border-color:#a4b4a0 transparent;color:#4a524a">000</td><td style="background:#f0f6c4;border-color:#a4b4a0 transparent;color:#4a524a">140</td><td style="background:#d4f4c8;border-color:#a4b4a0 transparent;color:#4a524a">040</td><td style="background:#c4f0c4">+/-Transition: time=5.52ns</td></tr><tr><td style="background:#fff"></td><td style="background:#fff">4</td><td style="background:#fff">Transition</td><td style="background:#fff">C1</td><td style="background:#d4f4c8;color:#3c443c">-164.92ns</td><td style="background:#d4f4c8;border-color:#a4b4a0 transparent;color:#4a524a">000</td><td style="background:#f0f6c4;border-color:#a4b4a0 transparent;color:#4a524a">000</td><td style="background:#d4f4c8;border-color:#a4b4a0 transparent;color:#4a524a">000</td><td style="background:#f0f6c4;border-color:#a4b4a0 transparent;color:#4a524a">140</td><td style="background:#d4f4c8;border-color:#a4b4a0 transparent;color:#4a524a">000</td><td style="background:#fff">+/-Transition: time=5.52ns</td></tr><tr><td style="background:#fff"></td><td style="background:#fff">5</td><td style="background:#fff">Transition</td><td style="background:#fff">C1</td><td style="background:#d4f4c8;color:#3c443c">-44.96ns</td><td style="background:#d4f4c8;border-color:#a4b4a0 transparent;color:#4a524a">000</td><td style="background:#f0f6c4;border-color:#a4b4a0 transparent;color:#4a524a">000</td><td style="background:#d4f4c8;border-color:#a4b4a0 transparent;color:#4a524a">000</td><td style="background:#f0f6c4;border-color:#a4b4a0 transparent;color:#4a524a">119</td><td style="background:#d4f4c8;border-color:#a4b4a0 transparent;color:#4a524a">960</td><td style="background:#fff">+/-Transition: time=5.4ns</td></tr><tr><td style="background:#b0eaea">Z3</td><td style="background:#b0eaea">6</td><td style="background:#b0eaea">Glitch</td><td style="background:#b0eaea">C4</td><td style="background:#d4f4c8;color:#3c443c">-15.734us</td><td style="background:#d4f4c8;border-color:#a4b4a0 transparent;color:#4a524a">000</td><td style="background:#f0f6c4;border-color:#a4b4a0 transparent;color:#4a524a">000</td><td style="background:#d4f4c8;border-color:#a4b4a0 transparent;color:#4a524a">015</td><td style="background:#f0f6c4;border-color:#a4b4a0 transparent;color:#4a524a">689</td><td style="background:#d4f4c8;border-color:#a4b4a0 transparent;color:#4a524a">280</td><td style="background:#b0eaea">+/-Glitch: width=120ps</td></tr></table><table style="left:198.5px;top:364.5px;width:91px"><colgroup><col style="width:18px"><col style="width:18.3px"><col style="width:18.2px"><col style="width:18px"><col style="width:18px"></colgroup><tr><td style="background:#d4f4c8;border-color:#5c7c5c transparent;color:#4a524a">000</td><td style="background:#f0f6c4;border-color:#5c7c5c transparent;color:#4a524a">000</td><td style="background:#d4f4c8;border-color:#5c7c5c transparent;color:#4a524a">000</td><td style="background:#f0f6c4;border-color:#5c7c5c transparent;color:#4a524a">304</td><td style="background:#d4f4c8;border-color:#5c7c5c transparent;color:#4a524a">000</td></tr><tr><td style="background:#d4f4c8;border-color:#5c7c5c transparent;color:#4a524a">000</td><td style="background:#f0f6c4;border-color:#5c7c5c transparent;color:#4a524a">000</td><td style="background:#d4f4c8;border-color:#5c7c5c transparent;color:#4a524a">015</td><td style="background:#f0f6c4;border-color:#5c7c5c transparent;color:#4a524a">432</td><td style="background:#d4f4c8;border-color:#5c7c5c transparent;color:#4a524a">000</td></tr><tr><td style="background:#d4f4c8;border-color:#5c7c5c transparent;color:#4a524a">000</td><td style="background:#f0f6c4;border-color:#5c7c5c transparent;color:#4a524a">000</td><td style="background:#d4f4c8;border-color:#5c7c5c transparent;color:#4a524a">015</td><td style="background:#f0f6c4;border-color:#5c7c5c transparent;color:#4a524a">736</td><td style="background:#d4f4c8;border-color:#5c7c5c transparent;color:#4a524a">000</td></tr></table><div class="abs" style="left:198.3px;top:364.3px;width:92px;height:27.2px;box-sizing:border-box;border:1.3px solid #1c3c20"></div><span class="lbl" style="left:166px;width:32px;top:365.5px;text-align:right;font-size:7.2px">&#916;Z1,Z2</span><span class="lbl" style="left:166px;width:32px;top:374px;text-align:right;font-size:7.2px">&#916;Z2,Z3</span><span class="lbl" style="left:166px;width:32px;top:382.5px;text-align:right;font-size:7.2px">&#916;Z1,Z3</span><span class="lbl" style="left:107.5px;top:373.3px">Total Marks:</span><span class="lbl" style="left:159.5px;top:373.3px">10</span><span class="lbl" style="left:85px;width:62px;top:398px">Search Marks</span><span class="lbl" style="left:335px;width:52px;top:398px">All Marks</span><div class="btn" style="left:63.5px;top:408px;width:32.5px;">Save</div><div class="btn" style="left:99px;top:408px;width:32.5px;">Save All</div><div class="btn" style="left:134.5px;top:408px;width:30px;">Clear</div><div class="btn" style="left:180px;top:408px;width:33.5px;font-weight:normal;font-size:7.5px">Digits &gt;&gt;</div><div class="btn" style="left:267px;top:408px;width:32.5px;font-weight:normal;font-size:7.5px;background:linear-gradient(#c8c8d0,#9898a4 50%,#a8a8b4);border-color:#404050;color:#202030">&lt;&lt;Digits</div><div class="btn" style="left:327px;top:408px;width:31.5px;font-weight:normal;font-size:7.5px">Export</div><div class="btn" style="left:363px;top:408px;width:31.5px;font-weight:normal;font-size:7.5px">Clear</div><span class="lbl" style="left:506px;width:60px;top:277.7px">Search</span><div class="btn" style="left:520px;top:288px;width:32.5px;background:linear-gradient(#ffd890 0%,#f8a828 40%,#f09010 75%,#f8b040 100%);border-color:#704008;color:#301800;height:15.5px">On</div><div class="abs" style="left:497px;top:308.5px;width:78px;height:1.3px;background:#e8ecff"></div><span class="lbl" style="left:506px;width:60px;top:313px">Mark</span><div class="btn" style="left:501px;top:327px;width:31.5px;height:15.5px"><span style="font-size:5.5px;position:relative;top:-.8px">&#9664;</span> Prev</div><div class="btn" style="left:541px;top:327px;width:32.5px;height:15.5px">Next <span style="font-size:5.5px;position:relative;top:-.8px">&#9654;</span></div><div class="btn" style="left:521px;top:347px;width:31.5px;height:15.5px">Set/Clr</div><div class="abs" style="left:497px;top:368px;width:78px;height:1.3px;background:#e8ecff"></div><span class="lbl" style="left:496px;width:84px;top:372px;font-weight:normal;color:#0c1450;font-size:7.8px">Bring Cursor to Mark</span><div class="btn" style="left:496px;top:387px;width:36.5px;height:15.5px;font-weight:normal">Cursor 1</div><div class="btn" style="left:538px;top:387px;width:36.5px;height:15.5px;font-weight:normal">Cursor 2</div><span class="lbl" style="left:496px;width:84px;top:409px;font-weight:normal;color:#0c1450;font-size:7.8px">Bring Zoom to Mark</span><div class="btn" style="left:497px;top:420.5px;width:32px;height:15.5px;font-weight:normal">Zoom 2</div><div class="btn" style="left:542px;top:420.5px;width:32px;height:15.5px;font-weight:normal">Zoom 3</div><div class="abs" style="left:582px;top:274px;width:14px;height:14px;border-radius:7px;background:radial-gradient(circle at 40% 35%,#fff,#d0d8f0 70%,#98a4d0);box-shadow:0 0 1px #334;font-size:9.5px;line-height:12px;text-align:center;color:#334">x</div><svg class="abs" style="left:9px;top:272px" width="8" height="8"><g fill="#b8c4f0"><rect x="1" y="1" width="1.3" height="1.3"/><rect x="4" y="1" width="1.3" height="1.3"/><rect x="1" y="4" width="1.3" height="1.3"/></g></svg>
<svg class="abs" style="left:400px;top:390px" width="90" height="55" viewBox="400 390 90 55" font-family="'Liberation Sans',sans-serif">
<defs><linearGradient id="lg1" x1="0" y1="1" x2="1" y2="0"><stop offset="0" stop-color="#b81010"/><stop offset=".45" stop-color="#e42018"/><stop offset=".8" stop-color="#f86820"/><stop offset="1" stop-color="#f8a028"/></linearGradient>
<linearGradient id="lg2" x1="0" y1="0" x2="0" y2="1"><stop offset="0" stop-color="#f89828"/><stop offset=".5" stop-color="#f05018"/><stop offset="1" stop-color="#d82010"/></linearGradient>
<radialGradient id="rg1" cx=".4" cy=".35" r=".7"><stop offset="0" stop-color="#60d8e8"/><stop offset=".6" stop-color="#1898a8"/><stop offset="1" stop-color="#0c6878"/></radialGradient></defs>
<path d="M480,417 C477,421.5 470,426.5 459,429.3 L450,434.3 L462,434 C472,432.5 478.5,427 480,417Z" fill="#f08018"/>
<path d="M461.5,397.2 L449.5,408 L447,419 L445,433.8 L451.5,433.8 L453.5,420 L456.5,407Z" fill="url(#lg2)"/>
<path d="M404.5,435.3 L409,427.5 L415,418.5 L421,411 L427,405 L434.5,400.8 L445,398.6 L461.5,397.2 L451,409 L445.5,408.6 L439.5,410.2 L433.7,414 L429.2,420 L424.7,427.5 L420,435.3Z" fill="url(#lg1)"/>
<path d="M427.2,423.6 L451.7,423.6 L451.2,426.8 L425.3,426.8Z" fill="#e02418"/>
<ellipse cx="437.3" cy="414.6" rx="4.6" ry="3" fill="#48cce4" transform="rotate(-38 437.3 414.6)"/>
<circle cx="456" cy="417.7" r="6.8" fill="url(#rg1)"/>
<text x="450.3" y="419.8" font-size="6.2" font-weight="bold" fill="#102030">und</text>
<text x="428" y="436" font-size="9.2" font-weight="bold" font-style="italic" fill="#fff" stroke="#e01818" stroke-width=".9" paint-order="stroke" textLength="46" lengthAdjust="spacingAndGlyphs">CCEXP</text>
</svg><span class="abs" style="left:488px;top:417px;font-family:'Liberation Sans','Noto Sans CJK SC',sans-serif;font-size:7px;line-height:9px;color:#b8a060;opacity:.55;white-space:nowrap;letter-spacing:4.3px">测试仪器综合服务商</span>
<svg class="abs" style="left:0;top:0" width="600" height="450" font-family="'Liberation Sans',sans-serif"><text x="39" y="220.8" textLength="35" lengthAdjust="spacingAndGlyphs" font-size="7.6" fill="#f0f0f0" font-weight="bold" >300mV/div</text><text x="107" y="220.8" textLength="13" lengthAdjust="spacingAndGlyphs" font-size="7.6" fill="#f0f0f0" font-weight="bold" >50&#937;</text><text x="125" y="218.8" textLength="4.5" lengthAdjust="spacingAndGlyphs" font-size="6" fill="#f0f0f0" font-weight="bold" >B</text><text x="128.5" y="222.2" textLength="6.0" lengthAdjust="spacingAndGlyphs" font-size="6" fill="#f0f0f0" font-weight="bold" >W</text><text x="134.5" y="220.8" textLength="18.0" lengthAdjust="spacingAndGlyphs" font-size="7.6" fill="#f0f0f0" font-weight="bold" >:8.0G</text><text x="39" y="233.3" textLength="35" lengthAdjust="spacingAndGlyphs" font-size="7.6" fill="#f0f0f0" font-weight="bold" >300mV/div</text><text x="107" y="233.3" textLength="13" lengthAdjust="spacingAndGlyphs" font-size="7.6" fill="#f0f0f0" font-weight="bold" >50&#937;</text><text x="125" y="231.3" textLength="4.5" lengthAdjust="spacingAndGlyphs" font-size="6" fill="#f0f0f0" font-weight="bold" >B</text><text x="128.5" y="234.7" textLength="6.0" lengthAdjust="spacingAndGlyphs" font-size="6" fill="#f0f0f0" font-weight="bold" >W</text><text x="134.5" y="233.3" textLength="18.0" lengthAdjust="spacingAndGlyphs" font-size="7.6" fill="#f0f0f0" font-weight="bold" >:8.0G</text><text x="39" y="245.8" textLength="35" lengthAdjust="spacingAndGlyphs" font-size="7.6" fill="#f0f0f0" font-weight="bold" >100mV/div</text><text x="107" y="245.8" textLength="13" lengthAdjust="spacingAndGlyphs" font-size="7.6" fill="#f0f0f0" font-weight="bold" >50&#937;</text><text x="125" y="243.8" textLength="4.5" lengthAdjust="spacingAndGlyphs" font-size="6" fill="#f0f0f0" font-weight="bold" >B</text><text x="128.5" y="247.2" textLength="6.0" lengthAdjust="spacingAndGlyphs" font-size="6" fill="#f0f0f0" font-weight="bold" >W</text><text x="134.5" y="245.8" textLength="18.0" lengthAdjust="spacingAndGlyphs" font-size="7.6" fill="#f0f0f0" font-weight="bold" >:8.0G</text><text x="39" y="257.8" textLength="23" lengthAdjust="spacingAndGlyphs" font-size="7.6" fill="#f0f0f0" font-weight="bold" >600mV</text><text x="68" y="257.8" textLength="19" lengthAdjust="spacingAndGlyphs" font-size="7.6" fill="#f0f0f0" font-weight="bold" >4.0ns</text><text x="98" y="257.8" textLength="24" lengthAdjust="spacingAndGlyphs" font-size="7.6" fill="#f0f0f0" font-weight="bold" >-20.6ns</text><text x="127" y="257.8" textLength="21" lengthAdjust="spacingAndGlyphs" font-size="7.6" fill="#f0f0f0" font-weight="bold" >19.4ns</text><text x="204" y="220.8" textLength="22" lengthAdjust="spacingAndGlyphs" font-size="7.6" fill="#f0f0f0" font-weight="bold" >600mV</text><text x="232" y="220.8" textLength="19" lengthAdjust="spacingAndGlyphs" font-size="7.6" fill="#f0f0f0" font-weight="bold" >4.0ns</text><text x="262" y="220.8" textLength="25" lengthAdjust="spacingAndGlyphs" font-size="7.6" fill="#f0f0f0" font-weight="bold" >-20.6ns</text><text x="292" y="220.8" textLength="21" lengthAdjust="spacingAndGlyphs" font-size="7.6" fill="#f0f0f0" font-weight="bold" >19.4ns</text><text x="204" y="233.3" textLength="22" lengthAdjust="spacingAndGlyphs" font-size="7.6" fill="#f0f0f0" font-weight="bold" >100mV</text><text x="232" y="233.3" textLength="19" lengthAdjust="spacingAndGlyphs" font-size="7.6" fill="#f0f0f0" font-weight="bold" >4.0ns</text><text x="262" y="233.3" textLength="25" lengthAdjust="spacingAndGlyphs" font-size="7.6" fill="#f0f0f0" font-weight="bold" >-20.6ns</text><text x="292" y="233.3" textLength="21" lengthAdjust="spacingAndGlyphs" font-size="7.6" fill="#f0f0f0" font-weight="bold" >19.4ns</text><text x="204" y="245.8" textLength="22" lengthAdjust="spacingAndGlyphs" font-size="7.6" fill="#f0f0f0" font-weight="bold" >300mV</text><text x="232" y="245.8" textLength="19" lengthAdjust="spacingAndGlyphs" font-size="7.6" fill="#f0f0f0" font-weight="bold" >2.0ns</text><text x="262" y="245.8" textLength="25" lengthAdjust="spacingAndGlyphs" font-size="7.6" fill="#f0f0f0" font-weight="bold" >-15.7&#181;s</text><text x="291" y="245.8" textLength="24" lengthAdjust="spacingAndGlyphs" font-size="7.6" fill="#f0f0f0" font-weight="bold" >-15.7&#181;s</text><text x="204" y="257.8" textLength="22" lengthAdjust="spacingAndGlyphs" font-size="7.6" fill="#f0f0f0" font-weight="bold" >300mV</text><text x="232" y="257.8" textLength="19" lengthAdjust="spacingAndGlyphs" font-size="7.6" fill="#f0f0f0" font-weight="bold" >2.0ns</text><text x="262" y="257.8" textLength="25" lengthAdjust="spacingAndGlyphs" font-size="7.6" fill="#f0f0f0" font-weight="bold" >-15.7&#181;s</text><text x="291" y="257.8" textLength="24" lengthAdjust="spacingAndGlyphs" font-size="7.6" fill="#f0f0f0" font-weight="bold" >-15.7&#181;s</text><text x="382" y="220.8" textLength="19" lengthAdjust="spacingAndGlyphs" font-size="7.6" fill="#f0f0f0" font-weight="bold" >StHld</text><text x="463" y="220.8" textLength="20" lengthAdjust="spacingAndGlyphs" font-size="7.6" fill="#f0f0f0" font-weight="bold" >2.0&#181;s</text><text x="492" y="220.8" textLength="30.5" lengthAdjust="spacingAndGlyphs" font-size="7.6" fill="#f0f0f0" font-weight="bold" >25.0GS/s</text><text x="548" y="220.8" textLength="40" lengthAdjust="spacingAndGlyphs" font-size="7.6" fill="#f0f0f0" font-weight="bold" >40.0ps/pt</text><text x="463" y="233.3" textLength="27.5" lengthAdjust="spacingAndGlyphs" font-size="7.6" fill="#e81818" font-weight="bold" >Stopped</text><text x="498" y="233.3" textLength="36" lengthAdjust="spacingAndGlyphs" font-size="7.6" fill="#f0f0f0" font-weight="bold" >Single Seq</text><text x="463" y="245.8" textLength="21" lengthAdjust="spacingAndGlyphs" font-size="7.6" fill="#f0f0f0" font-weight="bold" >1 acqs</text><text x="545" y="245.8" textLength="28" lengthAdjust="spacingAndGlyphs" font-size="7.6" fill="#f0f0f0" font-weight="bold" >RL:500k</text><text x="463" y="257.8" textLength="17" lengthAdjust="spacingAndGlyphs" font-size="7.6" fill="#f0f0f0" font-weight="bold" >Cons</text><text x="487" y="257.8" textLength="46" lengthAdjust="spacingAndGlyphs" font-size="7.6" fill="#f0f0f0" font-weight="bold" >June 05, 2007</text><text x="561" y="257.8" textLength="27" lengthAdjust="spacingAndGlyphs" font-size="7.6" fill="#e89028" font-weight="bold" >10:52:38</text><text transform="translate(487.5,416.4) scale(1,.74)" x="0" y="0" stroke="#ee1c24" stroke-width=".7" textLength="110" lengthAdjust="spacingAndGlyphs" font-family="'Liberation Sans','Noto Sans CJK SC',sans-serif" font-weight="900" font-size="26.5" fill="#ee1c24">艾克赛普</text><text x="486" y="437.8" textLength="110" lengthAdjust="spacingAndGlyphs" font-size="12.8" font-weight="bold" font-style="italic" fill="#0a0e30" stroke="#0a0e30" stroke-width=".45">www.hncsw.net</text></svg>
</body></html>
